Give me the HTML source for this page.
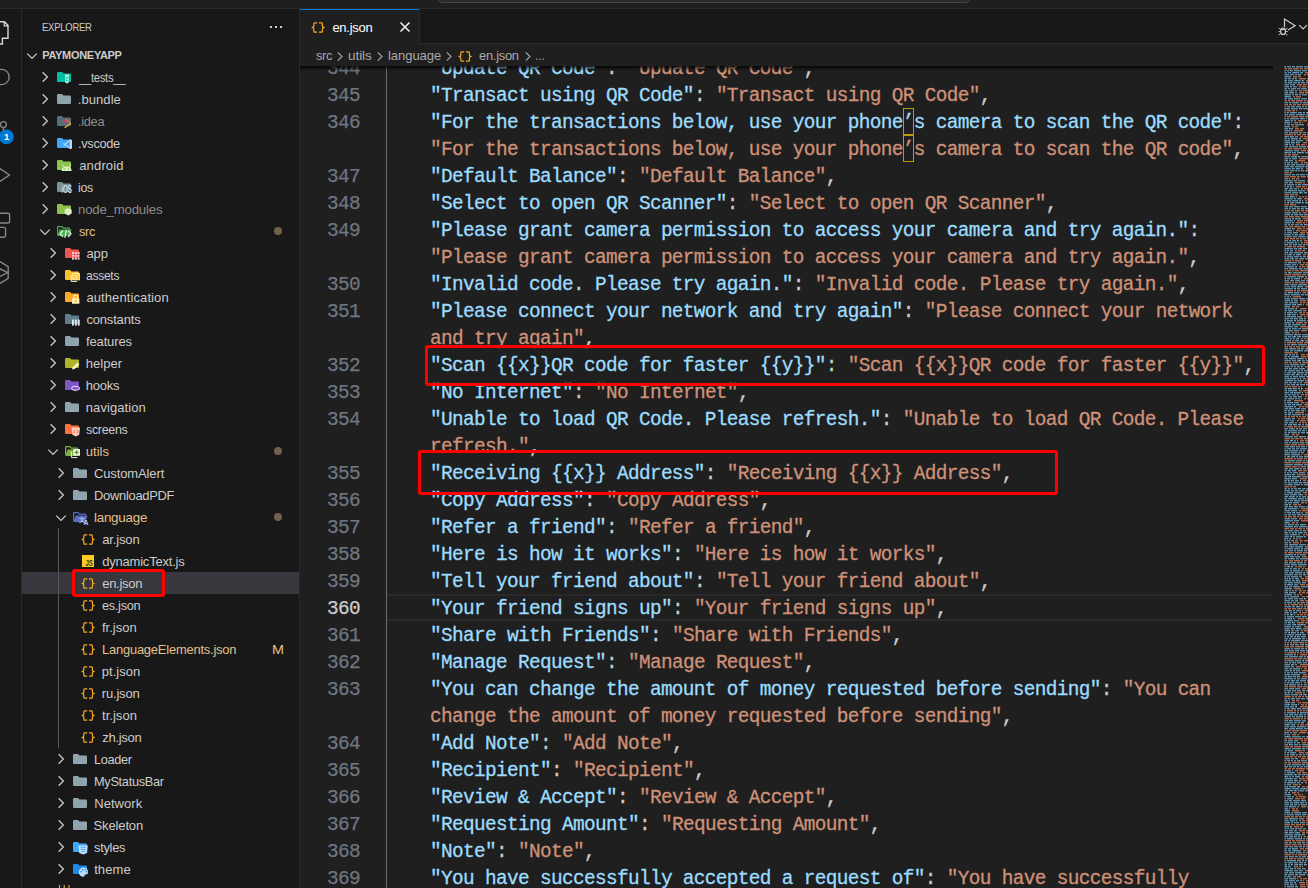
<!DOCTYPE html><html><head><meta charset="utf-8"><title>en.json - PayMoneyApp</title><style>
*{margin:0;padding:0;box-sizing:border-box}
html,body{width:1308px;height:888px;overflow:hidden;background:#1f1f1f}
body{position:relative;font-family:"Liberation Sans", sans-serif;font-size:13px;color:#cccccc}
.abs{position:absolute}
.t{position:absolute;white-space:pre;line-height:22px;height:22px}
svg{position:absolute;overflow:visible}
.code{position:absolute;left:430px;white-space:pre;font-family:"Liberation Mono", monospace;font-size:19.4px;letter-spacing:-0.642px;line-height:27px;height:27px;color:#cccccc;-webkit-text-stroke:0.3px}
.ln{position:absolute;left:300px;width:60px;text-align:right;white-space:pre;font-family:"Liberation Mono", monospace;font-size:19.4px;letter-spacing:-0.642px;line-height:27px;height:27px;color:#6e7681;-webkit-text-stroke:0.25px}
.k{color:#9cdcfe} .s{color:#ce9178}
.u{outline:1px solid #bd9b03;outline-offset:-1px;padding:4px 0 1px}
</style></head><body>
<div class="abs" style="left:0;top:0;width:1308px;height:9px;background:#1f1f1f;border-bottom:1px solid #2b2b2b"></div>
<div class="abs" style="left:436.5px;top:-10px;width:534px;height:13px;background:#2a2a2a;border:1px solid #454545;border-radius:6px"></div>
<div class="abs" style="left:0;top:9px;width:22px;height:879px;background:#181818;border-right:1px solid #2b2b2b"></div>
<div class="abs" style="left:22px;top:9px;width:278px;height:879px;background:#181818;border-right:1px solid #2b2b2b"></div>
<div class="abs" style="left:300px;top:9px;width:1008px;height:35px;background:#181818;border-bottom:1px solid #2b2b2b"></div>
<div class="abs" style="left:300px;top:9px;width:120px;height:35px;background:#1f1f1f;border-right:1px solid #2b2b2b"></div><div class="abs" style="left:300px;top:9px;width:119px;height:1px;background:#0078d4"></div>
<div class="t" style="left:42.2px;top:16px;color:#cccccc;font-size:11px;font-weight:400;letter-spacing:-0.3px;transform:scaleX(0.8636);transform-origin:0 50%;">EXPLORER</div>
<div class="abs" style="left:270px;top:26px;width:2px;height:2px;background:#ccc;box-shadow:5px 0 0 #ccc,10px 0 0 #ccc"></div>
<svg style="left:27px;top:52.5px" width="10" height="6"><path d="M0.3,0.6 L5,5.4 L9.7,0.6" fill="none" stroke="#cccccc" stroke-width="1.25"/></svg>
<div class="t" style="left:42.2px;top:44px;color:#cccccc;font-size:11px;font-weight:700;letter-spacing:-0.3px;">PAYMONEYAPP</div>
<svg style="left:42px;top:72px" width="6" height="10"><path d="M0.6,0.3 L5.4,5 L0.6,9.7" fill="none" stroke="#cccccc" stroke-width="1.25"/></svg>
<svg style="left:57px;top:72px" width="16" height="13"><path d="M0,1.1 Q0,0 1.1,0 H5 L6.4,1.5 H12.9 Q14,1.5 14,2.6 V8.9 Q14,10 12.9,10 H1.1 Q0,10 0,8.9 Z" fill="#00bfa5"/><path d="M7.6,2.6 H12.4 V3.6 H11.8 V9.6 Q11.8,11.6 10,11.6 Q8.2,11.6 8.2,9.6 V3.6 H7.6 Z" fill="#b2f0e3"/><rect x="9.2" y="5" width="1.6" height="1.4" fill="#00bfa5"/><rect x="9.2" y="7.6" width="1.6" height="1.6" fill="#00bfa5"/></svg>
<div class="t" style="left:79.4px;top:67px;color:#cccccc;font-size:13px;font-weight:400;letter-spacing:-0.3px;transform:scaleX(0.8615);transform-origin:0 50%;">__tests__</div>
<svg style="left:42px;top:94px" width="6" height="10"><path d="M0.6,0.3 L5.4,5 L0.6,9.7" fill="none" stroke="#cccccc" stroke-width="1.25"/></svg>
<svg style="left:57px;top:94px" width="16" height="13"><path d="M0,1.1 Q0,0 1.1,0 H5 L6.4,1.5 H12.9 Q14,1.5 14,2.6 V8.9 Q14,10 12.9,10 H1.1 Q0,10 0,8.9 Z" fill="#90a4ae"/></svg>
<div class="t" style="left:77.8px;top:89px;color:#cccccc;font-size:13px;font-weight:400;letter-spacing:0.067px;">.bundle</div>
<svg style="left:42px;top:116px" width="6" height="10"><path d="M0.6,0.3 L5.4,5 L0.6,9.7" fill="none" stroke="#cccccc" stroke-width="1.25"/></svg>
<svg style="left:57px;top:116px" width="16" height="13"><path d="M0,1.1 Q0,0 1.1,0 H5 L6.4,1.5 H12.9 Q14,1.5 14,2.6 V8.9 Q14,10 12.9,10 H1.1 Q0,10 0,8.9 Z" fill="#546e7a"/><path d="M9,3.4 L6.4,5.6 L8.6,7.3" fill="none" stroke="#ec2f6b" stroke-width="1.3"/><path d="M9,3.4 L13.8,7.6" fill="none" stroke="#f5703a" stroke-width="1.1"/><path d="M13.8,7.6 L7.6,11.8" fill="none" stroke="#fbb429" stroke-width="1.2"/></svg>
<div class="t" style="left:77.8px;top:111px;color:#8c8c8c;font-size:13px;font-weight:400;letter-spacing:-0.3px;transform:scaleX(0.9813);transform-origin:0 50%;">.idea</div>
<svg style="left:42px;top:138px" width="6" height="10"><path d="M0.6,0.3 L5.4,5 L0.6,9.7" fill="none" stroke="#cccccc" stroke-width="1.25"/></svg>
<svg style="left:57px;top:138px" width="16" height="13"><path d="M0,1.1 Q0,0 1.1,0 H5 L6.4,1.5 H12.9 Q14,1.5 14,2.6 V8.9 Q14,10 12.9,10 H1.1 Q0,10 0,8.9 Z" fill="#42a5f5"/><path d="M6.6,5.4 L13.4,10.6 L14.4,10.2 V2.4 L13.4,2 L6.6,7.4" fill="none" stroke="#bbdefb" stroke-width="1.1"/><path d="M13.6,2.2 V10.4" stroke="#bbdefb" stroke-width="1.6"/></svg>
<div class="t" style="left:77.8px;top:133px;color:#cccccc;font-size:13px;font-weight:400;letter-spacing:-0.3px;transform:scaleX(0.9814);transform-origin:0 50%;">.vscode</div>
<svg style="left:42px;top:160px" width="6" height="10"><path d="M0.6,0.3 L5.4,5 L0.6,9.7" fill="none" stroke="#cccccc" stroke-width="1.25"/></svg>
<svg style="left:57px;top:160px" width="16" height="13"><path d="M0,1.1 Q0,0 1.1,0 H5 L6.4,1.5 H12.9 Q14,1.5 14,2.6 V8.9 Q14,10 12.9,10 H1.1 Q0,10 0,8.9 Z" fill="#8bc34a"/><path d="M4.6,11 Q4.6,6.4 9.6,6.4 Q14.6,6.4 14.6,11 Z" fill="#dcedc8"/><path d="M5.4,4.4 L7.2,7 M13.8,4.4 L12,7" stroke="#dcedc8" stroke-width="1"/><circle cx="7.6" cy="9" r="0.8" fill="#8bc34a"/><circle cx="11.6" cy="9" r="0.8" fill="#8bc34a"/></svg>
<div class="t" style="left:79.2px;top:155px;color:#cccccc;font-size:13px;font-weight:400;letter-spacing:0.167px;">android</div>
<svg style="left:42px;top:182px" width="6" height="10"><path d="M0.6,0.3 L5.4,5 L0.6,9.7" fill="none" stroke="#cccccc" stroke-width="1.25"/></svg>
<svg style="left:57px;top:182px" width="16" height="13"><path d="M0,1.1 Q0,0 1.1,0 H5 L6.4,1.5 H12.9 Q14,1.5 14,2.6 V8.9 Q14,10 12.9,10 H1.1 Q0,10 0,8.9 Z" fill="#78909c"/><text x="4.6" y="10.6" font-family='"Liberation Sans",sans-serif' font-size="10" font-weight="400" fill="#e9eef1" textLength="10.4" lengthAdjust="spacingAndGlyphs">iOS</text></svg>
<div class="t" style="left:78.2px;top:177px;color:#cccccc;font-size:13px;font-weight:400;letter-spacing:-0.3px;transform:scaleX(0.9573);transform-origin:0 50%;">ios</div>
<svg style="left:42px;top:204px" width="6" height="10"><path d="M0.6,0.3 L5.4,5 L0.6,9.7" fill="none" stroke="#cccccc" stroke-width="1.25"/></svg>
<svg style="left:57px;top:204px" width="16" height="13"><path d="M0,1.1 Q0,0 1.1,0 H5 L6.4,1.5 H12.9 Q14,1.5 14,2.6 V8.9 Q14,10 12.9,10 H1.1 Q0,10 0,8.9 Z" fill="#8bc34a"/><path d="M11.2,3.9 L14.7,5.8 V9.6 L11.2,11.5 L7.7,9.6 V5.8 Z" fill="#dcedc8"/></svg>
<div class="t" style="left:78.2px;top:199px;color:#8c8c8c;font-size:13px;font-weight:400;letter-spacing:-0.173px;transform:scaleX(1.0134);transform-origin:0 50%;">node_modules</div>
<svg style="left:40px;top:228.5px" width="10" height="6"><path d="M0.3,0.6 L5,5.4 L9.7,0.6" fill="none" stroke="#cccccc" stroke-width="1.25"/></svg>
<svg style="left:57px;top:226px" width="16" height="13"><path d="M0.6,8.8 V1.2 Q0.6,0.6 1.2,0.6 H4.9 L6.3,2.1 H12 Q12.6,2.1 12.6,2.7 V3.6" fill="none" stroke="#4caf50" stroke-width="1.2"/><path d="M0.3,10 L2.6,3.6 H14.6 L12.4,10 Z" fill="#4caf50"/><path d="M6,4.6 L3.2,7.8 L6,11 M11.2,4.6 L14,7.8 L11.2,11 M9.4,4 L7.8,11.8" fill="none" stroke="#e3f3e4" stroke-width="1.25"/></svg>
<div class="t" style="left:78.8px;top:221px;color:#e2c08d;font-size:13px;font-weight:400;letter-spacing:-0.3px;transform:scaleX(0.9695);transform-origin:0 50%;">src</div>
<div class="abs" style="left:274px;top:227px;width:8px;height:8px;border-radius:4px;background:#71614a"></div>
<svg style="left:50px;top:248px" width="6" height="10"><path d="M0.6,0.3 L5.4,5 L0.6,9.7" fill="none" stroke="#cccccc" stroke-width="1.25"/></svg>
<svg style="left:65px;top:248px" width="16" height="13"><path d="M0,1.1 Q0,0 1.1,0 H5 L6.4,1.5 H12.9 Q14,1.5 14,2.6 V8.9 Q14,10 12.9,10 H1.1 Q0,10 0,8.9 Z" fill="#ef5350"/><g fill="#ffcdd2"><rect x="7" y="4" width="2" height="2"/><rect x="9.8" y="4" width="2" height="2"/><rect x="12.6" y="4" width="2" height="2"/><rect x="7" y="6.8" width="2" height="2"/><rect x="9.8" y="6.8" width="2" height="2"/><rect x="12.6" y="6.8" width="2" height="2"/><rect x="7" y="9.6" width="2" height="2"/><rect x="9.8" y="9.6" width="2" height="2"/><rect x="12.6" y="9.6" width="2" height="2"/></g></svg>
<div class="t" style="left:86.4px;top:243px;color:#cccccc;font-size:13px;font-weight:400;letter-spacing:-0.1px;">app</div>
<svg style="left:50px;top:270px" width="6" height="10"><path d="M0.6,0.3 L5.4,5 L0.6,9.7" fill="none" stroke="#cccccc" stroke-width="1.25"/></svg>
<svg style="left:65px;top:270px" width="16" height="13"><path d="M0,1.1 Q0,0 1.1,0 H5 L6.4,1.5 H12.9 Q14,1.5 14,2.6 V8.9 Q14,10 12.9,10 H1.1 Q0,10 0,8.9 Z" fill="#fbc02d"/><path d="M6.2,5.4 V11.4 H12" fill="none" stroke="#fff3c4" stroke-width="1"/><rect x="8" y="3.6" width="6.4" height="6.2" fill="none" stroke="#fff3c4" stroke-width="1"/><path d="M9.4,5.6 H13 M9.4,7.6 H13" stroke="#fff3c4" stroke-width="0.9"/></svg>
<div class="t" style="left:86.4px;top:265px;color:#cccccc;font-size:13px;font-weight:400;letter-spacing:-0.3px;transform:scaleX(0.926);transform-origin:0 50%;">assets</div>
<svg style="left:50px;top:292px" width="6" height="10"><path d="M0.6,0.3 L5.4,5 L0.6,9.7" fill="none" stroke="#cccccc" stroke-width="1.25"/></svg>
<svg style="left:65px;top:292px" width="16" height="13"><path d="M0,1.1 Q0,0 1.1,0 H5 L6.4,1.5 H12.9 Q14,1.5 14,2.6 V8.9 Q14,10 12.9,10 H1.1 Q0,10 0,8.9 Z" fill="#ffa726"/><rect x="7" y="6.2" width="7.4" height="5.6" rx="0.6" fill="#fff0b3"/><path d="M8.8,6.2 V4.8 Q8.8,3 10.7,3 Q12.6,3 12.6,4.8 V6.2" fill="none" stroke="#fff0b3" stroke-width="1.2"/><circle cx="10.7" cy="9" r="0.9" fill="#ffa726"/></svg>
<div class="t" style="left:86.4px;top:287px;color:#cccccc;font-size:13px;font-weight:400;letter-spacing:0.1px;">authentication</div>
<svg style="left:50px;top:314px" width="6" height="10"><path d="M0.6,0.3 L5.4,5 L0.6,9.7" fill="none" stroke="#cccccc" stroke-width="1.25"/></svg>
<svg style="left:65px;top:314px" width="16" height="13"><path d="M0,1.1 Q0,0 1.1,0 H5 L6.4,1.5 H12.9 Q14,1.5 14,2.6 V8.9 Q14,10 12.9,10 H1.1 Q0,10 0,8.9 Z" fill="#607d8b"/><g fill="#e3eaee"><rect x="7" y="5.6" width="1.9" height="6"/><rect x="9.9" y="5.6" width="1.9" height="6"/><rect x="12.8" y="5.6" width="1.9" height="6"/></g></svg>
<div class="t" style="left:86.4px;top:309px;color:#cccccc;font-size:13px;font-weight:400;letter-spacing:-0.175px;">constants</div>
<svg style="left:50px;top:336px" width="6" height="10"><path d="M0.6,0.3 L5.4,5 L0.6,9.7" fill="none" stroke="#cccccc" stroke-width="1.25"/></svg>
<svg style="left:65px;top:336px" width="16" height="13"><path d="M0,1.1 Q0,0 1.1,0 H5 L6.4,1.5 H12.9 Q14,1.5 14,2.6 V8.9 Q14,10 12.9,10 H1.1 Q0,10 0,8.9 Z" fill="#90a4ae"/></svg>
<div class="t" style="left:86.0px;top:331px;color:#cccccc;font-size:13px;font-weight:400;letter-spacing:-0.143px;">features</div>
<svg style="left:50px;top:358px" width="6" height="10"><path d="M0.6,0.3 L5.4,5 L0.6,9.7" fill="none" stroke="#cccccc" stroke-width="1.25"/></svg>
<svg style="left:65px;top:358px" width="16" height="13"><path d="M0,1.1 Q0,0 1.1,0 H5 L6.4,1.5 H12.9 Q14,1.5 14,2.6 V8.9 Q14,10 12.9,10 H1.1 Q0,10 0,8.9 Z" fill="#afb42b"/><path d="M7,11.4 L7.6,9.2 L12.4,4.4 L14.4,6.4 L9.6,11 Z" fill="#f4f7c7"/></svg>
<div class="t" style="left:85.8px;top:353px;color:#cccccc;font-size:13px;font-weight:400;letter-spacing:0.04px;">helper</div>
<svg style="left:50px;top:380px" width="6" height="10"><path d="M0.6,0.3 L5.4,5 L0.6,9.7" fill="none" stroke="#cccccc" stroke-width="1.25"/></svg>
<svg style="left:65px;top:380px" width="16" height="13"><path d="M0,1.1 Q0,0 1.1,0 H5 L6.4,1.5 H12.9 Q14,1.5 14,2.6 V8.9 Q14,10 12.9,10 H1.1 Q0,10 0,8.9 Z" fill="#7e57c2"/><ellipse cx="10.6" cy="8.3" rx="3.9" ry="1.9" fill="none" stroke="#e1c8fb" stroke-width="1.1"/><path d="M9.2,10 L10.6,11.6 L10.8,9.6 Z" fill="#e1c8fb"/></svg>
<div class="t" style="left:85.8px;top:375px;color:#cccccc;font-size:13px;font-weight:400;letter-spacing:-0.275px;">hooks</div>
<svg style="left:50px;top:402px" width="6" height="10"><path d="M0.6,0.3 L5.4,5 L0.6,9.7" fill="none" stroke="#cccccc" stroke-width="1.25"/></svg>
<svg style="left:65px;top:402px" width="16" height="13"><path d="M0,1.1 Q0,0 1.1,0 H5 L6.4,1.5 H12.9 Q14,1.5 14,2.6 V8.9 Q14,10 12.9,10 H1.1 Q0,10 0,8.9 Z" fill="#90a4ae"/></svg>
<div class="t" style="left:85.8px;top:397px;color:#cccccc;font-size:13px;font-weight:400;letter-spacing:0.067px;">navigation</div>
<svg style="left:50px;top:424px" width="6" height="10"><path d="M0.6,0.3 L5.4,5 L0.6,9.7" fill="none" stroke="#cccccc" stroke-width="1.25"/></svg>
<svg style="left:65px;top:424px" width="16" height="13"><path d="M0,1.1 Q0,0 1.1,0 H5 L6.4,1.5 H12.9 Q14,1.5 14,2.6 V8.9 Q14,10 12.9,10 H1.1 Q0,10 0,8.9 Z" fill="#ff7043"/><path d="M6.6,3.6 H15 L14.2,10.8 L10.8,12.6 L7.4,10.8 Z" fill="#ffccbc"/><path d="M9.8,6 L8.6,7.6 L9.8,9.2 M11.8,6 L13,7.6 L11.8,9.2" fill="none" stroke="#f4511e" stroke-width="0.9"/></svg>
<div class="t" style="left:86.4px;top:419px;color:#cccccc;font-size:13px;font-weight:400;letter-spacing:-0.3px;transform:scaleX(0.9548);transform-origin:0 50%;">screens</div>
<svg style="left:48px;top:448.5px" width="10" height="6"><path d="M0.3,0.6 L5,5.4 L9.7,0.6" fill="none" stroke="#cccccc" stroke-width="1.25"/></svg>
<svg style="left:65px;top:446px" width="16" height="13"><path d="M0.6,8.8 V1.2 Q0.6,0.6 1.2,0.6 H4.9 L6.3,2.1 H12 Q12.6,2.1 12.6,2.7 V3.6" fill="none" stroke="#7cb342" stroke-width="1.2"/><path d="M0.3,10 L2.6,3.6 H14.6 L12.4,10 Z" fill="#7cb342"/><path d="M6.4,5.4 V11.6 H12.4" fill="none" stroke="#e6f2d3" stroke-width="1"/><rect x="8.2" y="3" width="6.8" height="6.8" fill="#e6f2d3"/><path d="M9.8,6.4 H13.4 M11.6,4.6 V8.2" stroke="#558b2f" stroke-width="1.2"/></svg>
<div class="t" style="left:85.8px;top:441px;color:#e2c08d;font-size:13px;font-weight:400;letter-spacing:0.025px;">utils</div>
<div class="abs" style="left:274px;top:447px;width:8px;height:8px;border-radius:4px;background:#71614a"></div>
<svg style="left:58px;top:468px" width="6" height="10"><path d="M0.6,0.3 L5.4,5 L0.6,9.7" fill="none" stroke="#cccccc" stroke-width="1.25"/></svg>
<svg style="left:73px;top:468px" width="16" height="13"><path d="M0,1.1 Q0,0 1.1,0 H5 L6.4,1.5 H12.9 Q14,1.5 14,2.6 V8.9 Q14,10 12.9,10 H1.1 Q0,10 0,8.9 Z" fill="#90a4ae"/></svg>
<div class="t" style="left:93.9px;top:463px;color:#cccccc;font-size:13px;font-weight:400;letter-spacing:-0.11px;">CustomAlert</div>
<svg style="left:58px;top:490px" width="6" height="10"><path d="M0.6,0.3 L5.4,5 L0.6,9.7" fill="none" stroke="#cccccc" stroke-width="1.25"/></svg>
<svg style="left:73px;top:490px" width="16" height="13"><path d="M0,1.1 Q0,0 1.1,0 H5 L6.4,1.5 H12.9 Q14,1.5 14,2.6 V8.9 Q14,10 12.9,10 H1.1 Q0,10 0,8.9 Z" fill="#90a4ae"/></svg>
<div class="t" style="left:94.2px;top:485px;color:#cccccc;font-size:13px;font-weight:400;letter-spacing:-0.3px;transform:scaleX(0.9963);transform-origin:0 50%;">DownloadPDF</div>
<svg style="left:56px;top:514.5px" width="10" height="6"><path d="M0.3,0.6 L5,5.4 L9.7,0.6" fill="none" stroke="#cccccc" stroke-width="1.25"/></svg>
<svg style="left:73px;top:512px" width="16" height="13"><path d="M0.6,8.8 V1.2 Q0.6,0.6 1.2,0.6 H4.9 L6.3,2.1 H12 Q12.6,2.1 12.6,2.7 V3.6" fill="none" stroke="#5c6bc0" stroke-width="1.2"/><path d="M0.3,10 L2.6,3.6 H14.6 L12.4,10 Z" fill="#5c6bc0"/><text x="6" y="9.6" font-family='"Liberation Sans",sans-serif' font-size="6.4" font-weight="700" fill="#c5cae9">文</text><text x="10.4" y="12.6" font-family='"Liberation Sans",sans-serif' font-size="6.8" font-weight="700" fill="#c5cae9">A</text></svg>
<div class="t" style="left:94.2px;top:507px;color:#e2c08d;font-size:13px;font-weight:400;letter-spacing:-0.229px;transform:scaleX(1.0275);transform-origin:0 50%;">language</div>
<div class="abs" style="left:274px;top:513px;width:8px;height:8px;border-radius:4px;background:#71614a"></div>
<svg style="left:81px;top:533.5px" width="15" height="11"><path d="M6.2,0.9 H3.7 Q2.8,0.9 2.8,1.8 V4.3 Q2.8,5.5 0.7,5.5 Q2.8,5.5 2.8,6.7 V9.2 Q2.8,10.1 3.7,10.1 H6.2" fill="none" stroke="#f9a825" stroke-width="1.2"/><path d="M8,0.9 H10.5 Q11.4,0.9 11.4,1.8 V4.3 Q11.4,5.5 13.5,5.5 Q11.4,5.5 11.4,6.7 V9.2 Q11.4,10.1 10.5,10.1 H8" fill="none" stroke="#f9a825" stroke-width="1.2"/><circle cx="1.5" cy="5.5" r="0.8" fill="#f9a825"/><circle cx="12.7" cy="5.5" r="0.8" fill="#f9a825"/></svg>
<div class="t" style="left:102.2px;top:529px;color:#cccccc;font-size:13px;font-weight:400;letter-spacing:-0.133px;">ar.json</div>
<svg style="left:82px;top:555px" width="12" height="12"><rect x="0" y="0" width="12" height="12" fill="#ffca28"/><text x="3.5" y="10.8" font-family='"Liberation Sans",sans-serif' font-size="8.3" font-weight="700" fill="#3d3100" textLength="7.4" lengthAdjust="spacingAndGlyphs">JS</text></svg>
<div class="t" style="left:102.2px;top:551px;color:#cccccc;font-size:13px;font-weight:400;letter-spacing:-0.208px;">dynamicText.js</div>
<div class="abs" style="left:22px;top:572px;width:277px;height:22px;background:#37373d"></div>
<div class="abs" style="left:72px;top:569px;width:93px;height:28px;border:3px solid #ff0000;border-radius:3px"></div>
<svg style="left:81px;top:577.5px" width="15" height="11"><path d="M6.2,0.9 H3.7 Q2.8,0.9 2.8,1.8 V4.3 Q2.8,5.5 0.7,5.5 Q2.8,5.5 2.8,6.7 V9.2 Q2.8,10.1 3.7,10.1 H6.2" fill="none" stroke="#f9a825" stroke-width="1.2"/><path d="M8,0.9 H10.5 Q11.4,0.9 11.4,1.8 V4.3 Q11.4,5.5 13.5,5.5 Q11.4,5.5 11.4,6.7 V9.2 Q11.4,10.1 10.5,10.1 H8" fill="none" stroke="#f9a825" stroke-width="1.2"/><circle cx="1.5" cy="5.5" r="0.8" fill="#f9a825"/><circle cx="12.7" cy="5.5" r="0.8" fill="#f9a825"/></svg>
<div class="t" style="left:102.2px;top:573px;color:#cccccc;font-size:13px;font-weight:400;letter-spacing:-0.267px;">en.json</div>
<svg style="left:81px;top:599.5px" width="15" height="11"><path d="M6.2,0.9 H3.7 Q2.8,0.9 2.8,1.8 V4.3 Q2.8,5.5 0.7,5.5 Q2.8,5.5 2.8,6.7 V9.2 Q2.8,10.1 3.7,10.1 H6.2" fill="none" stroke="#f9a825" stroke-width="1.2"/><path d="M8,0.9 H10.5 Q11.4,0.9 11.4,1.8 V4.3 Q11.4,5.5 13.5,5.5 Q11.4,5.5 11.4,6.7 V9.2 Q11.4,10.1 10.5,10.1 H8" fill="none" stroke="#f9a825" stroke-width="1.2"/><circle cx="1.5" cy="5.5" r="0.8" fill="#f9a825"/><circle cx="12.7" cy="5.5" r="0.8" fill="#f9a825"/></svg>
<div class="t" style="left:102.2px;top:595px;color:#cccccc;font-size:13px;font-weight:400;letter-spacing:-0.3px;transform:scaleX(0.9796);transform-origin:0 50%;">es.json</div>
<svg style="left:81px;top:621.5px" width="15" height="11"><path d="M6.2,0.9 H3.7 Q2.8,0.9 2.8,1.8 V4.3 Q2.8,5.5 0.7,5.5 Q2.8,5.5 2.8,6.7 V9.2 Q2.8,10.1 3.7,10.1 H6.2" fill="none" stroke="#f9a825" stroke-width="1.2"/><path d="M8,0.9 H10.5 Q11.4,0.9 11.4,1.8 V4.3 Q11.4,5.5 13.5,5.5 Q11.4,5.5 11.4,6.7 V9.2 Q11.4,10.1 10.5,10.1 H8" fill="none" stroke="#f9a825" stroke-width="1.2"/><circle cx="1.5" cy="5.5" r="0.8" fill="#f9a825"/><circle cx="12.7" cy="5.5" r="0.8" fill="#f9a825"/></svg>
<div class="t" style="left:102.0px;top:617px;color:#cccccc;font-size:13px;font-weight:400;">fr.json</div>
<svg style="left:81px;top:643.5px" width="15" height="11"><path d="M6.2,0.9 H3.7 Q2.8,0.9 2.8,1.8 V4.3 Q2.8,5.5 0.7,5.5 Q2.8,5.5 2.8,6.7 V9.2 Q2.8,10.1 3.7,10.1 H6.2" fill="none" stroke="#f9a825" stroke-width="1.2"/><path d="M8,0.9 H10.5 Q11.4,0.9 11.4,1.8 V4.3 Q11.4,5.5 13.5,5.5 Q11.4,5.5 11.4,6.7 V9.2 Q11.4,10.1 10.5,10.1 H8" fill="none" stroke="#f9a825" stroke-width="1.2"/><circle cx="1.5" cy="5.5" r="0.8" fill="#f9a825"/><circle cx="12.7" cy="5.5" r="0.8" fill="#f9a825"/></svg>
<div class="t" style="left:101.8px;top:639px;color:#e2c08d;font-size:13px;font-weight:400;letter-spacing:-0.2px;transform:scaleX(0.9926);transform-origin:0 50%;">LanguageElements.json</div>
<div class="t" style="left:272.0px;top:639px;color:#e2c08d;font-size:13px;font-weight:400;letter-spacing:0.5px;transform:scaleX(1.1111);transform-origin:0 50%;">M</div>
<svg style="left:81px;top:665.5px" width="15" height="11"><path d="M6.2,0.9 H3.7 Q2.8,0.9 2.8,1.8 V4.3 Q2.8,5.5 0.7,5.5 Q2.8,5.5 2.8,6.7 V9.2 Q2.8,10.1 3.7,10.1 H6.2" fill="none" stroke="#f9a825" stroke-width="1.2"/><path d="M8,0.9 H10.5 Q11.4,0.9 11.4,1.8 V4.3 Q11.4,5.5 13.5,5.5 Q11.4,5.5 11.4,6.7 V9.2 Q11.4,10.1 10.5,10.1 H8" fill="none" stroke="#f9a825" stroke-width="1.2"/><circle cx="1.5" cy="5.5" r="0.8" fill="#f9a825"/><circle cx="12.7" cy="5.5" r="0.8" fill="#f9a825"/></svg>
<div class="t" style="left:101.8px;top:661px;color:#cccccc;font-size:13px;font-weight:400;letter-spacing:0.017px;">pt.json</div>
<svg style="left:81px;top:687.5px" width="15" height="11"><path d="M6.2,0.9 H3.7 Q2.8,0.9 2.8,1.8 V4.3 Q2.8,5.5 0.7,5.5 Q2.8,5.5 2.8,6.7 V9.2 Q2.8,10.1 3.7,10.1 H6.2" fill="none" stroke="#f9a825" stroke-width="1.2"/><path d="M8,0.9 H10.5 Q11.4,0.9 11.4,1.8 V4.3 Q11.4,5.5 13.5,5.5 Q11.4,5.5 11.4,6.7 V9.2 Q11.4,10.1 10.5,10.1 H8" fill="none" stroke="#f9a825" stroke-width="1.2"/><circle cx="1.5" cy="5.5" r="0.8" fill="#f9a825"/><circle cx="12.7" cy="5.5" r="0.8" fill="#f9a825"/></svg>
<div class="t" style="left:101.8px;top:683px;color:#cccccc;font-size:13px;font-weight:400;letter-spacing:-0.183px;">ru.json</div>
<svg style="left:81px;top:709.5px" width="15" height="11"><path d="M6.2,0.9 H3.7 Q2.8,0.9 2.8,1.8 V4.3 Q2.8,5.5 0.7,5.5 Q2.8,5.5 2.8,6.7 V9.2 Q2.8,10.1 3.7,10.1 H6.2" fill="none" stroke="#f9a825" stroke-width="1.2"/><path d="M8,0.9 H10.5 Q11.4,0.9 11.4,1.8 V4.3 Q11.4,5.5 13.5,5.5 Q11.4,5.5 11.4,6.7 V9.2 Q11.4,10.1 10.5,10.1 H8" fill="none" stroke="#f9a825" stroke-width="1.2"/><circle cx="1.5" cy="5.5" r="0.8" fill="#f9a825"/><circle cx="12.7" cy="5.5" r="0.8" fill="#f9a825"/></svg>
<div class="t" style="left:102.0px;top:705px;color:#cccccc;font-size:13px;font-weight:400;letter-spacing:0.033px;">tr.json</div>
<svg style="left:81px;top:731.5px" width="15" height="11"><path d="M6.2,0.9 H3.7 Q2.8,0.9 2.8,1.8 V4.3 Q2.8,5.5 0.7,5.5 Q2.8,5.5 2.8,6.7 V9.2 Q2.8,10.1 3.7,10.1 H6.2" fill="none" stroke="#f9a825" stroke-width="1.2"/><path d="M8,0.9 H10.5 Q11.4,0.9 11.4,1.8 V4.3 Q11.4,5.5 13.5,5.5 Q11.4,5.5 11.4,6.7 V9.2 Q11.4,10.1 10.5,10.1 H8" fill="none" stroke="#f9a825" stroke-width="1.2"/><circle cx="1.5" cy="5.5" r="0.8" fill="#f9a825"/><circle cx="12.7" cy="5.5" r="0.8" fill="#f9a825"/></svg>
<div class="t" style="left:102.2px;top:727px;color:#cccccc;font-size:13px;font-weight:400;letter-spacing:-0.267px;">zh.json</div>
<svg style="left:58px;top:754px" width="6" height="10"><path d="M0.6,0.3 L5.4,5 L0.6,9.7" fill="none" stroke="#cccccc" stroke-width="1.25"/></svg>
<svg style="left:73px;top:754px" width="16" height="13"><path d="M0,1.1 Q0,0 1.1,0 H5 L6.4,1.5 H12.9 Q14,1.5 14,2.6 V8.9 Q14,10 12.9,10 H1.1 Q0,10 0,8.9 Z" fill="#90a4ae"/></svg>
<div class="t" style="left:94.2px;top:749px;color:#cccccc;font-size:13px;font-weight:400;letter-spacing:-0.3px;transform:scaleX(0.9772);transform-origin:0 50%;">Loader</div>
<svg style="left:58px;top:776px" width="6" height="10"><path d="M0.6,0.3 L5.4,5 L0.6,9.7" fill="none" stroke="#cccccc" stroke-width="1.25"/></svg>
<svg style="left:73px;top:776px" width="16" height="13"><path d="M0,1.1 Q0,0 1.1,0 H5 L6.4,1.5 H12.9 Q14,1.5 14,2.6 V8.9 Q14,10 12.9,10 H1.1 Q0,10 0,8.9 Z" fill="#90a4ae"/></svg>
<div class="t" style="left:94.2px;top:771px;color:#cccccc;font-size:13px;font-weight:400;letter-spacing:-0.3px;transform:scaleX(0.9806);transform-origin:0 50%;">MyStatusBar</div>
<svg style="left:58px;top:798px" width="6" height="10"><path d="M0.6,0.3 L5.4,5 L0.6,9.7" fill="none" stroke="#cccccc" stroke-width="1.25"/></svg>
<svg style="left:73px;top:798px" width="16" height="13"><path d="M0,1.1 Q0,0 1.1,0 H5 L6.4,1.5 H12.9 Q14,1.5 14,2.6 V8.9 Q14,10 12.9,10 H1.1 Q0,10 0,8.9 Z" fill="#90a4ae"/></svg>
<div class="t" style="left:94.2px;top:793px;color:#cccccc;font-size:13px;font-weight:400;letter-spacing:0.067px;">Network</div>
<svg style="left:58px;top:820px" width="6" height="10"><path d="M0.6,0.3 L5.4,5 L0.6,9.7" fill="none" stroke="#cccccc" stroke-width="1.25"/></svg>
<svg style="left:73px;top:820px" width="16" height="13"><path d="M0,1.1 Q0,0 1.1,0 H5 L6.4,1.5 H12.9 Q14,1.5 14,2.6 V8.9 Q14,10 12.9,10 H1.1 Q0,10 0,8.9 Z" fill="#90a4ae"/></svg>
<div class="t" style="left:93.6px;top:815px;color:#cccccc;font-size:13px;font-weight:400;letter-spacing:-0.143px;">Skeleton</div>
<svg style="left:58px;top:842px" width="6" height="10"><path d="M0.6,0.3 L5.4,5 L0.6,9.7" fill="none" stroke="#cccccc" stroke-width="1.25"/></svg>
<svg style="left:73px;top:842px" width="16" height="13"><path d="M0,1.1 Q0,0 1.1,0 H5 L6.4,1.5 H12.9 Q14,1.5 14,2.6 V8.9 Q14,10 12.9,10 H1.1 Q0,10 0,8.9 Z" fill="#42a5f5"/><path d="M5.4,3.4 H14.8 L14,11 L10.1,12.6 L6.2,11 Z" fill="#bbdefb"/><path d="M7.6,5.4 H12.8 M7.8,7.4 H12.6 M8,9.4 H12.4" stroke="#42a5f5" stroke-width="0.9"/></svg>
<div class="t" style="left:93.9px;top:837px;color:#cccccc;font-size:13px;font-weight:400;letter-spacing:-0.3px;transform:scaleX(0.9937);transform-origin:0 50%;">styles</div>
<svg style="left:58px;top:864px" width="6" height="10"><path d="M0.6,0.3 L5.4,5 L0.6,9.7" fill="none" stroke="#cccccc" stroke-width="1.25"/></svg>
<svg style="left:73px;top:864px" width="16" height="13"><path d="M0,1.1 Q0,0 1.1,0 H5 L6.4,1.5 H12.9 Q14,1.5 14,2.6 V8.9 Q14,10 12.9,10 H1.1 Q0,10 0,8.9 Z" fill="#1e88e5"/><path d="M10.4,3.6 A4.6,4.6 0 1 0 10.4,12.8 Q11.6,12.8 11.4,11.8 Q11.2,10.4 12.6,10.4 H13.6 Q15,10.4 15,8.6 Q15,3.6 10.4,3.6 Z" fill="#bbdefb"/><circle cx="8" cy="7.8" r="0.8" fill="#1e88e5"/><circle cx="9.6" cy="5.8" r="0.8" fill="#1e88e5"/><circle cx="12" cy="5.8" r="0.8" fill="#1e88e5"/><circle cx="13.2" cy="7.8" r="0.8" fill="#1e88e5"/></svg>
<div class="t" style="left:94.2px;top:859px;color:#cccccc;font-size:13px;font-weight:400;letter-spacing:0.075px;">theme</div>
<div class="abs" style="left:58px;top:528px;width:1px;height:220px;background:#585858"></div>
<div class="abs" style="left:58.5px;top:884.5px;width:1.5px;height:4px;background:#fbc02d;box-shadow:4.7px 0 0 #fbc02d,9.5px 0 0 #fbc02d"></div>
<svg style="left:0;top:9px" width="22" height="300"><path d="M-4,12.8 H4.4 L8,16.4 V29.2 H2.4 V35 H-4" fill="none" stroke="#d7d7d7" stroke-width="1.4"/><path d="M4.2,13 V16.8 H8" fill="none" stroke="#d7d7d7" stroke-width="1.2"/><circle cx="1.6" cy="68" r="7.6" fill="none" stroke="#868686" stroke-width="1.4"/><circle cx="3.4" cy="115.6" r="3" fill="none" stroke="#868686" stroke-width="1.4"/><path d="M3.4,118.6 V124" stroke="#868686" stroke-width="1.4"/><circle cx="6.4" cy="127.8" r="7.4" fill="#0078d4"/><text x="4" y="131.4" font-family='"Liberation Sans",sans-serif' font-size="9.5" font-weight="700" fill="#fff">1</text><path d="M-1,159 L9.4,166 L-1,173" fill="none" stroke="#868686" stroke-width="1.4"/><rect x="-2" y="204.2" width="11.6" height="9.8" rx="1.6" fill="none" stroke="#868686" stroke-width="1.4"/><rect x="-5" y="218.4" width="10.6" height="9.8" rx="1.6" fill="none" stroke="#868686" stroke-width="1.4"/><path d="M-1,252 L8.2,257.6 V269.4 L-1,275" fill="none" stroke="#868686" stroke-width="1.4"/><path d="M-1,259.4 L7.6,263.6 L-1,268" fill="none" stroke="#868686" stroke-width="1.4"/></svg>
<svg style="left:311px;top:21.5px" width="15" height="11"><path d="M6.2,0.9 H3.7 Q2.8,0.9 2.8,1.8 V4.3 Q2.8,5.5 0.7,5.5 Q2.8,5.5 2.8,6.7 V9.2 Q2.8,10.1 3.7,10.1 H6.2" fill="none" stroke="#f9a825" stroke-width="1.2"/><path d="M8,0.9 H10.5 Q11.4,0.9 11.4,1.8 V4.3 Q11.4,5.5 13.5,5.5 Q11.4,5.5 11.4,6.7 V9.2 Q11.4,10.1 10.5,10.1 H8" fill="none" stroke="#f9a825" stroke-width="1.2"/><circle cx="1.5" cy="5.5" r="0.8" fill="#f9a825"/><circle cx="12.7" cy="5.5" r="0.8" fill="#f9a825"/></svg>
<div class="t" style="left:332.4px;top:16.5px;color:#ffffff;font-size:13px;font-weight:400;letter-spacing:-0.267px;">en.json</div>
<svg style="left:400px;top:22px" width="10" height="10"><path d="M0.5,0.5 L9.5,9.5 M9.5,0.5 L0.5,9.5" stroke="#f4f4f4" stroke-width="1.45" fill="none"/></svg>
<svg style="left:1276px;top:16px" width="32" height="24"><path d="M8.5,11 V3 L19.2,9.7 L12,14.1" fill="none" stroke="#d0d0d0" stroke-width="1.15" stroke-linejoin="miter"/><ellipse cx="7.1" cy="15.3" rx="2.5" ry="3.3" fill="#181818" stroke="#d0d0d0" stroke-width="1.1"/><path d="M4.9,13.6 H9.3" stroke="#d0d0d0" stroke-width="1"/><path d="M2.7,12.2 L4.7,13.4 M11.5,12.2 L9.5,13.4 M2.4,15.6 H4.5 M11.8,15.6 H9.7 M2.7,19 L4.8,17.6 M11.5,19 L9.4,17.6" stroke="#d0d0d0" stroke-width="0.9" fill="none"/><path d="M23.2,9.2 L27.1,13 L31,9.2" fill="none" stroke="#d0d0d0" stroke-width="1.15"/></svg>
<div class="t" style="left:316.0px;top:45px;color:#a9a9a9;font-size:13px;font-weight:400;letter-spacing:-0.3px;transform:scaleX(0.9756);transform-origin:0 50%;">src</div>
<svg style="left:337px;top:51.5px" width="6" height="9"><path d="M0.8,0.4 L5,4.5 L0.8,8.6" fill="none" stroke="#a9a9a9" stroke-width="1.1"/></svg>
<div class="t" style="left:348.2px;top:45px;color:#a9a9a9;font-size:13px;font-weight:400;letter-spacing:-0.05px;transform:scaleX(1.0364);transform-origin:0 50%;">utils</div>
<svg style="left:377px;top:51.5px" width="6" height="9"><path d="M0.8,0.4 L5,4.5 L0.8,8.6" fill="none" stroke="#a9a9a9" stroke-width="1.1"/></svg>
<div class="t" style="left:388.0px;top:45px;color:#a9a9a9;font-size:13px;font-weight:400;letter-spacing:-0.043px;">language</div>
<svg style="left:446px;top:51.5px" width="6" height="9"><path d="M0.8,0.4 L5,4.5 L0.8,8.6" fill="none" stroke="#a9a9a9" stroke-width="1.1"/></svg>
<svg style="left:458px;top:50.5px" width="15" height="11"><path d="M6.2,0.9 H3.7 Q2.8,0.9 2.8,1.8 V4.3 Q2.8,5.5 0.7,5.5 Q2.8,5.5 2.8,6.7 V9.2 Q2.8,10.1 3.7,10.1 H6.2" fill="none" stroke="#f9a825" stroke-width="1.2"/><path d="M8,0.9 H10.5 Q11.4,0.9 11.4,1.8 V4.3 Q11.4,5.5 13.5,5.5 Q11.4,5.5 11.4,6.7 V9.2 Q11.4,10.1 10.5,10.1 H8" fill="none" stroke="#f9a825" stroke-width="1.2"/><circle cx="1.5" cy="5.5" r="0.8" fill="#f9a825"/><circle cx="12.7" cy="5.5" r="0.8" fill="#f9a825"/></svg>
<div class="t" style="left:478.8px;top:45px;color:#a9a9a9;font-size:13px;font-weight:400;letter-spacing:-0.3px;transform:scaleX(0.9975);transform-origin:0 50%;">en.json</div>
<svg style="left:525px;top:51.5px" width="6" height="9"><path d="M0.8,0.4 L5,4.5 L0.8,8.6" fill="none" stroke="#a9a9a9" stroke-width="1.1"/></svg>
<div class="t" style="left:535.0px;top:45px;color:#a9a9a9;font-size:13px;font-weight:400;letter-spacing:-0.3px;transform:scaleX(0.7818);transform-origin:0 50%;">…</div>
<div class="abs" style="left:300px;top:66px;width:1008px;height:822px;overflow:hidden">
<div class="abs" style="left:-300px;top:-66px;width:1308px;height:888px">
<div class="abs" style="left:386px;top:66px;width:1px;height:822px;background:#6c6c6c"></div>
<div class="ln" style="top:56px;">344</div>
<div class="code" style="top:56px"><span class="k">"Update QR Code"</span>: <span class="s">"Update QR Code"</span>,</div>
<div class="ln" style="top:83px;">345</div>
<div class="code" style="top:83px"><span class="k">"Transact using QR Code"</span>: <span class="s">"Transact using QR Code"</span>,</div>
<div class="ln" style="top:110px;">346</div>
<div class="code" style="top:110px"><span class="k">"For the transactions below, use your phone<span class="u">’</span>s camera to scan the QR code"</span>:</div>
<div class="code" style="top:137px"><span class="s">"For the transactions below, use your phone<span class="u">’</span>s camera to scan the QR code"</span>,</div>
<div class="ln" style="top:164px;">347</div>
<div class="code" style="top:164px"><span class="k">"Default Balance"</span>: <span class="s">"Default Balance"</span>,</div>
<div class="ln" style="top:191px;">348</div>
<div class="code" style="top:191px"><span class="k">"Select to open QR Scanner"</span>: <span class="s">"Select to open QR Scanner"</span>,</div>
<div class="ln" style="top:218px;">349</div>
<div class="code" style="top:218px"><span class="k">"Please grant camera permission to access your camera and try again."</span>:</div>
<div class="code" style="top:245px"><span class="s">"Please grant camera permission to access your camera and try again."</span>,</div>
<div class="ln" style="top:272px;">350</div>
<div class="code" style="top:272px"><span class="k">"Invalid code. Please try again."</span>: <span class="s">"Invalid code. Please try again."</span>,</div>
<div class="ln" style="top:299px;">351</div>
<div class="code" style="top:299px"><span class="k">"Please connect your network and try again"</span>: <span class="s">"Please connect your network</span></div>
<div class="code" style="top:326px"><span class="s">and try again"</span>,</div>
<div class="ln" style="top:353px;">352</div>
<div class="code" style="top:353px"><span class="k">"Scan {{x}}QR code for faster {{y}}"</span>: <span class="s">"Scan {{x}}QR code for faster {{y}}"</span>,</div>
<div class="ln" style="top:380px;">353</div>
<div class="code" style="top:380px"><span class="k">"No Internet"</span>: <span class="s">"No Internet"</span>,</div>
<div class="ln" style="top:407px;">354</div>
<div class="code" style="top:407px"><span class="k">"Unable to load QR Code. Please refresh."</span>: <span class="s">"Unable to load QR Code. Please</span></div>
<div class="code" style="top:434px"><span class="s">refresh."</span>,</div>
<div class="ln" style="top:461px;">355</div>
<div class="code" style="top:461px"><span class="k">"Receiving {{x}} Address"</span>: <span class="s">"Receiving {{x}} Address"</span>,</div>
<div class="ln" style="top:488px;">356</div>
<div class="code" style="top:488px"><span class="k">"Copy Address"</span>: <span class="s">"Copy Address"</span>,</div>
<div class="ln" style="top:515px;">357</div>
<div class="code" style="top:515px"><span class="k">"Refer a friend"</span>: <span class="s">"Refer a friend"</span>,</div>
<div class="ln" style="top:542px;">358</div>
<div class="code" style="top:542px"><span class="k">"Here is how it works"</span>: <span class="s">"Here is how it works"</span>,</div>
<div class="ln" style="top:569px;">359</div>
<div class="code" style="top:569px"><span class="k">"Tell your friend about"</span>: <span class="s">"Tell your friend about"</span>,</div>
<div class="abs" style="left:387px;top:594px;width:885px;height:27px;border-top:2px solid #292929;border-bottom:2px solid #292929"></div>
<div class="ln" style="top:596px;color:#cccccc;">360</div>
<div class="code" style="top:596px"><span class="k">"Your friend signs up"</span>: <span class="s">"Your friend signs up"</span>,</div>
<div class="ln" style="top:623px;">361</div>
<div class="code" style="top:623px"><span class="k">"Share with Friends"</span>: <span class="s">"Share with Friends"</span>,</div>
<div class="ln" style="top:650px;">362</div>
<div class="code" style="top:650px"><span class="k">"Manage Request"</span>: <span class="s">"Manage Request"</span>,</div>
<div class="ln" style="top:677px;">363</div>
<div class="code" style="top:677px"><span class="k">"You can change the amount of money requested before sending"</span>: <span class="s">"You can</span></div>
<div class="code" style="top:704px"><span class="s">change the amount of money requested before sending"</span>,</div>
<div class="ln" style="top:731px;">364</div>
<div class="code" style="top:731px"><span class="k">"Add Note"</span>: <span class="s">"Add Note"</span>,</div>
<div class="ln" style="top:758px;">365</div>
<div class="code" style="top:758px"><span class="k">"Recipient"</span>: <span class="s">"Recipient"</span>,</div>
<div class="ln" style="top:785px;">366</div>
<div class="code" style="top:785px"><span class="k">"Review &amp; Accept"</span>: <span class="s">"Review &amp; Accept"</span>,</div>
<div class="ln" style="top:812px;">367</div>
<div class="code" style="top:812px"><span class="k">"Requesting Amount"</span>: <span class="s">"Requesting Amount"</span>,</div>
<div class="ln" style="top:839px;">368</div>
<div class="code" style="top:839px"><span class="k">"Note"</span>: <span class="s">"Note"</span>,</div>
<div class="ln" style="top:866px;">369</div>
<div class="code" style="top:866px"><span class="k">"You have successfully accepted a request of"</span>: <span class="s">"You have successfully</span></div>
</div></div>
<div class="abs" style="left:300px;top:66px;width:973px;height:5px;background:linear-gradient(#000000cc,#00000000)"></div>
<div class="abs" style="left:425px;top:345px;width:840px;height:41px;border:3px solid #ff0000;border-radius:3px"></div>
<div class="abs" style="left:418px;top:450px;width:640px;height:45px;border:3px solid #ff0000;border-radius:3px"></div>
<svg style="left:1284px;top:66px" width="24" height="822" shape-rendering="crispEdges"><path id="mb" d="M0,0.5h2M3,0.5h4M8,0.5h3M12,0.5h7M20,0.5h5M0,4.5h2M3,4.5h2M6,4.5h3M10,4.5h7M18,4.5h5M24,4.5h1M0,6.5h3M4,6.5h3M8,6.5h7M16,6.5h3M0,8.5h5M6,8.5h4M11,8.5h2M14,8.5h3M0,10.5h7M0,12.5h3M4,12.5h3M8,12.5h2M11,12.5h2M0,14.5h3M4,14.5h5M10,14.5h7M18,14.5h2M0,16.5h3M4,16.5h4M9,16.5h4M14,16.5h2M17,16.5h4M22,16.5h3M0,18.5h5M6,18.5h5M0,20.5h5M6,20.5h2M9,20.5h4M0,22.5h3M4,22.5h2M7,22.5h5M13,22.5h3M17,22.5h6M0,24.5h4M5,24.5h5M11,24.5h2M0,26.5h4M5,26.5h5M11,26.5h2M0,28.5h7M8,28.5h2M11,28.5h3M15,28.5h2M18,28.5h5M0,30.5h7M0,32.5h3M4,32.5h5M10,32.5h6M17,32.5h6M24,32.5h1M0,36.5h4M5,36.5h2M8,36.5h7M16,36.5h2M19,36.5h6M0,40.5h2M3,40.5h3M7,40.5h4M12,40.5h5M18,40.5h2M21,40.5h2M0,42.5h6M7,42.5h7M15,42.5h3M19,42.5h6M0,46.5h2M3,46.5h2M6,46.5h7M14,46.5h4M19,46.5h2M22,46.5h3M0,48.5h4M5,48.5h6M12,48.5h9M22,48.5h3M0,52.5h2M3,52.5h2M6,52.5h9M16,52.5h5M22,52.5h1M0,54.5h6M7,54.5h2M10,54.5h2M0,56.5h6M7,56.5h1M0,58.5h2M3,58.5h3M7,58.5h3M11,58.5h9M0,60.5h6M0,62.5h4M5,62.5h4M0,64.5h6M7,64.5h1M0,66.5h4M5,66.5h9M15,66.5h3M19,66.5h3M23,66.5h2M0,70.5h5M6,70.5h4M11,70.5h3M0,72.5h3M4,72.5h2M7,72.5h7M15,72.5h2M0,74.5h6M7,74.5h4M12,74.5h7M0,76.5h6M7,76.5h4M12,76.5h4M0,78.5h4M5,78.5h2M8,78.5h2M0,80.5h4M5,80.5h9M15,80.5h7M23,80.5h2M0,84.5h9M10,84.5h5M0,86.5h7M8,86.5h4M13,86.5h7M21,86.5h4M0,90.5h6M7,90.5h6M14,90.5h2M17,90.5h7M0,92.5h4M5,92.5h2M8,92.5h5M0,94.5h4M5,94.5h4M0,96.5h2M3,96.5h3M7,96.5h2M10,96.5h4M0,98.5h2M3,98.5h3M7,98.5h4M12,98.5h9M22,98.5h3M0,100.5h5M6,100.5h4M11,100.5h9M21,100.5h4M0,102.5h7M8,102.5h3M12,102.5h4M17,102.5h2M0,104.5h5M6,104.5h4M11,104.5h2M14,104.5h2M17,104.5h3M21,104.5h4M0,108.5h7M8,108.5h3M12,108.5h3M16,108.5h5M22,108.5h3M0,112.5h4M5,112.5h1M0,114.5h9M10,114.5h3M14,114.5h7M0,116.5h4M5,116.5h4M0,118.5h2M3,118.5h7M11,118.5h2M14,118.5h3M18,118.5h7M0,120.5h2M3,120.5h2M6,120.5h2M9,120.5h1M0,122.5h4M5,122.5h4M10,122.5h3M14,122.5h1M0,124.5h3M4,124.5h9M14,124.5h7M0,126.5h7M8,126.5h6M15,126.5h4M20,126.5h3M24,126.5h1M0,130.5h5M6,130.5h5M12,130.5h1M0,132.5h9M10,132.5h2M13,132.5h5M0,134.5h2M3,134.5h4M8,134.5h6M15,134.5h2M18,134.5h1M0,136.5h2M3,136.5h2M6,136.5h4M11,136.5h6M18,136.5h2M21,136.5h4M0,140.5h4M5,140.5h4M10,140.5h6M17,140.5h6M0,142.5h4M5,142.5h2M8,142.5h4M13,142.5h3M17,142.5h3M21,142.5h4M0,146.5h7M8,146.5h6M15,146.5h2M0,148.5h6M7,148.5h2M10,148.5h4M15,148.5h4M20,148.5h5M0,152.5h7M8,152.5h2M11,152.5h6M0,154.5h9M10,154.5h1M0,156.5h7M8,156.5h2M0,158.5h3M4,158.5h2M7,158.5h3M11,158.5h4M16,158.5h3M20,158.5h5M0,162.5h7M8,162.5h3M0,164.5h2M3,164.5h5M9,164.5h1M0,166.5h2M3,166.5h5M9,166.5h5M0,168.5h7M8,168.5h2M11,168.5h3M15,168.5h6M0,170.5h2M3,170.5h5M9,170.5h4M14,170.5h7M22,170.5h3M0,174.5h4M5,174.5h2M8,174.5h4M13,174.5h2M16,174.5h2M0,176.5h2M3,176.5h7M11,176.5h2M14,176.5h1M0,178.5h4M5,178.5h3M9,178.5h4M14,178.5h4M19,178.5h2M22,178.5h3M0,182.5h9M10,182.5h3M14,182.5h4M19,182.5h4M24,182.5h1M0,184.5h2M3,184.5h2M6,184.5h3M0,186.5h4M5,186.5h4M10,186.5h9M20,186.5h4M0,188.5h2M3,188.5h5M9,188.5h2M12,188.5h5M0,190.5h2M3,190.5h6M10,190.5h5M16,190.5h2M19,190.5h3M23,190.5h1M0,192.5h5M6,192.5h4M11,192.5h3M15,192.5h5M21,192.5h4M0,196.5h3M4,196.5h9M14,196.5h3M0,198.5h7M8,198.5h4M13,198.5h1M0,200.5h2M3,200.5h7M11,200.5h2M0,202.5h4M5,202.5h9M15,202.5h4M20,202.5h4M0,206.5h3M4,206.5h4M9,206.5h9M19,206.5h6M0,210.5h2M3,210.5h9M13,210.5h7M21,210.5h2M0,212.5h2M3,212.5h3M7,212.5h2M10,212.5h6M17,212.5h1M0,214.5h5M6,214.5h4M11,214.5h5M17,214.5h4M22,214.5h3M0,218.5h5M6,218.5h7M14,218.5h9M24,218.5h1M0,220.5h2M3,220.5h3M7,220.5h5M13,220.5h6M0,222.5h9M10,222.5h2M13,222.5h3M17,222.5h6M24,222.5h1M0,226.5h3M4,226.5h5M10,226.5h5M16,226.5h1M0,228.5h6M7,228.5h9M17,228.5h3M21,228.5h3M0,230.5h2M3,230.5h2M6,230.5h1M0,232.5h6M7,232.5h7M15,232.5h6M22,232.5h3M0,234.5h6M7,234.5h2M10,234.5h4M0,236.5h4M5,236.5h9M0,238.5h7M8,238.5h4M13,238.5h5M19,238.5h1M0,240.5h6M0,242.5h3M4,242.5h6M11,242.5h2M0,244.5h3M4,244.5h4M9,244.5h9M19,244.5h3M0,246.5h2M3,246.5h6M10,246.5h3M0,248.5h2M3,248.5h4M8,248.5h4M13,248.5h1M0,250.5h2M3,250.5h9M13,250.5h5M0,252.5h5M6,252.5h3M10,252.5h4M15,252.5h4M20,252.5h2M0,254.5h2M3,254.5h6M10,254.5h2M13,254.5h9M23,254.5h2M0,256.5h7M8,256.5h2M0,258.5h3M4,258.5h3M8,258.5h9M18,258.5h4M0,260.5h9M10,260.5h4M0,262.5h4M5,262.5h2M8,262.5h5M14,262.5h3M18,262.5h6M0,264.5h4M5,264.5h4M10,264.5h5M0,266.5h6M0,268.5h9M10,268.5h7M18,268.5h7M0,270.5h3M4,270.5h3M8,270.5h4M13,270.5h4M18,270.5h7M0,272.5h5M6,272.5h2M9,272.5h2M12,272.5h3M0,274.5h7M8,274.5h2M11,274.5h4M16,274.5h4M21,274.5h4M0,278.5h2M3,278.5h3M7,278.5h6M14,278.5h9M24,278.5h1M0,282.5h4M5,282.5h7M13,282.5h3M17,282.5h3M21,282.5h3M0,284.5h5M6,284.5h3M10,284.5h9M20,284.5h5M0,288.5h4M5,288.5h2M8,288.5h3M12,288.5h2M0,290.5h3M4,290.5h2M7,290.5h8M0,292.5h4M5,292.5h7M13,292.5h7M21,292.5h2M24,292.5h1M0,294.5h7M8,294.5h4M13,294.5h4M18,294.5h3M22,294.5h3M0,298.5h2M3,298.5h2M6,298.5h9M16,298.5h5M0,300.5h6M7,300.5h2M10,300.5h2M13,300.5h3M17,300.5h2M0,302.5h4M5,302.5h3M9,302.5h5M15,302.5h6M0,304.5h3M4,304.5h7M12,304.5h4M17,304.5h2M20,304.5h4M0,306.5h2M3,306.5h4M8,306.5h4M13,306.5h7M21,306.5h3M0,308.5h6M7,308.5h4M12,308.5h4M17,308.5h2M20,308.5h3M0,310.5h5M6,310.5h2M9,310.5h5M15,310.5h6M22,310.5h3M0,312.5h2M3,312.5h9M13,312.5h2M16,312.5h1M0,314.5h9M10,314.5h3M14,314.5h6M21,314.5h4M0,316.5h4M5,316.5h3M9,316.5h3M13,316.5h2M16,316.5h2M0,318.5h2M3,318.5h3M7,318.5h4M12,318.5h3M16,318.5h5M22,318.5h2M0,322.5h3M4,322.5h4M9,322.5h4M14,322.5h2M17,322.5h2M0,324.5h3M4,324.5h9M0,326.5h5M6,326.5h3M10,326.5h7M18,326.5h1M0,328.5h3M4,328.5h3M8,328.5h4M13,328.5h2M0,330.5h4M5,330.5h3M9,330.5h4M14,330.5h4M0,332.5h3M4,332.5h6M11,332.5h2M14,332.5h2M17,332.5h1M0,334.5h2M3,334.5h4M0,336.5h2M3,336.5h6M10,336.5h5M0,338.5h3M4,338.5h3M8,338.5h3M12,338.5h6M0,340.5h9M10,340.5h2M0,342.5h4M5,342.5h5M11,342.5h5M17,342.5h5M0,344.5h3M4,344.5h2M7,344.5h4M12,344.5h4M17,344.5h3M21,344.5h1M0,346.5h3M4,346.5h3M8,346.5h1M0,348.5h3M4,348.5h3M8,348.5h9M18,348.5h2M21,348.5h3M0,352.5h7M8,352.5h3M0,354.5h5M6,354.5h4M0,356.5h4M5,356.5h5M11,356.5h2M0,358.5h3M4,358.5h4M9,358.5h4M14,358.5h3M18,358.5h2M21,358.5h3M0,362.5h4M5,362.5h6M12,362.5h2M15,362.5h3M19,362.5h4M0,364.5h3M4,364.5h9M14,364.5h3M18,364.5h3M22,364.5h1M0,366.5h3M4,366.5h2M7,366.5h6M14,366.5h2M17,366.5h4M22,366.5h3M0,368.5h5M0,370.5h9M10,370.5h4M15,370.5h7M23,370.5h2M0,374.5h5M6,374.5h3M10,374.5h2M13,374.5h1M0,376.5h4M5,376.5h2M8,376.5h7M16,376.5h4M21,376.5h3M0,380.5h5M6,380.5h5M12,380.5h4M17,380.5h4M22,380.5h1M0,382.5h2M3,382.5h4M8,382.5h3M12,382.5h3M16,382.5h7M24,382.5h1M0,384.5h4M5,384.5h9M15,384.5h3M19,384.5h2M0,386.5h6M7,386.5h6M14,386.5h2M17,386.5h3M0,388.5h6M7,388.5h9M17,388.5h1M0,390.5h2M3,390.5h3M7,390.5h4M12,390.5h2M15,390.5h4M20,390.5h4M0,394.5h3M4,394.5h7M12,394.5h6M19,394.5h2M22,394.5h3M0,398.5h9M10,398.5h9M20,398.5h4M0,402.5h4M5,402.5h4M10,402.5h5M16,402.5h2M19,402.5h3M23,402.5h1M0,404.5h3M4,404.5h3M8,404.5h4M0,406.5h2M3,406.5h2M6,406.5h2M9,406.5h5M15,406.5h6M0,408.5h7M8,408.5h3M0,410.5h3M4,410.5h3M8,410.5h9M18,410.5h6M0,412.5h7M8,412.5h5M0,414.5h3M4,414.5h2M7,414.5h3M11,414.5h4M16,414.5h1M0,416.5h3M4,416.5h4M9,416.5h5M15,416.5h3M19,416.5h5M0,418.5h2M3,418.5h6M10,418.5h6M17,418.5h2M20,418.5h5M0,422.5h3M4,422.5h2M7,422.5h2M10,422.5h3M14,422.5h3M18,422.5h3M22,422.5h2M0,424.5h6M7,424.5h3M11,424.5h3M15,424.5h5M21,424.5h4M0,426.5h2M3,426.5h6M10,426.5h7M0,428.5h5M6,428.5h7M14,428.5h5M0,430.5h4M5,430.5h6M12,430.5h2M15,430.5h2M18,430.5h4M23,430.5h2M0,432.5h3M4,432.5h9M14,432.5h6M21,432.5h3M0,434.5h5M6,434.5h3M10,434.5h6M17,434.5h7M0,436.5h3M4,436.5h4M9,436.5h6M0,438.5h4M5,438.5h2M0,440.5h4M5,440.5h4M10,440.5h4M15,440.5h6M22,440.5h2M0,442.5h3M4,442.5h9M14,442.5h1M0,444.5h6M7,444.5h6M0,446.5h2M3,446.5h4M8,446.5h3M12,446.5h4M17,446.5h2M0,448.5h3M4,448.5h3M8,448.5h4M13,448.5h4M18,448.5h6M0,452.5h6M7,452.5h6M0,454.5h9M10,454.5h5M0,456.5h6M0,458.5h3M4,458.5h6M11,458.5h4M16,458.5h6M0,460.5h9M10,460.5h4M15,460.5h9M0,464.5h3M4,464.5h5M10,464.5h5M16,464.5h2M19,464.5h3M23,464.5h2M0,466.5h4M5,466.5h2M8,466.5h2M11,466.5h2M14,466.5h5M20,466.5h3M24,466.5h1M0,468.5h5M6,468.5h7M14,468.5h2M0,470.5h5M6,470.5h2M9,470.5h2M12,470.5h7M20,470.5h2M0,472.5h4M5,472.5h2M0,474.5h2M3,474.5h3M7,474.5h3M11,474.5h3M0,476.5h4M5,476.5h2M0,478.5h4M5,478.5h9M15,478.5h7M23,478.5h2M0,480.5h4M5,480.5h5M11,480.5h8M0,482.5h2M3,482.5h6M10,482.5h6M17,482.5h2M20,482.5h5M0,484.5h4M5,484.5h4M10,484.5h2M13,484.5h6M20,484.5h3M24,484.5h1M0,488.5h9M10,488.5h2M13,488.5h2M16,488.5h6M0,490.5h5M6,490.5h4M11,490.5h5M0,492.5h3M4,492.5h7M12,492.5h3M16,492.5h9M0,496.5h4M5,496.5h7M13,496.5h6M20,496.5h2M0,498.5h6M7,498.5h6M14,498.5h9M24,498.5h1M0,500.5h2M3,500.5h3M7,500.5h2M0,502.5h5M6,502.5h2M9,502.5h4M14,502.5h2M0,504.5h5M6,504.5h2M9,504.5h7M17,504.5h2M0,506.5h4M5,506.5h5M11,506.5h7M19,506.5h2M22,506.5h3M0,508.5h9M10,508.5h4M15,508.5h3M19,508.5h3M23,508.5h2M0,510.5h2M3,510.5h3M7,510.5h7M15,510.5h3M0,512.5h4M5,512.5h2M8,512.5h2M11,512.5h4M0,514.5h7M8,514.5h3M12,514.5h4M0,516.5h3M4,516.5h5M10,516.5h7M18,516.5h4M0,518.5h2M3,518.5h6M10,518.5h4M0,520.5h4M5,520.5h3M9,520.5h7M17,520.5h8M0,522.5h8M0,524.5h4M5,524.5h2M8,524.5h2M11,524.5h2M0,526.5h4M5,526.5h7M0,528.5h8M0,530.5h2M3,530.5h2M6,530.5h9M0,532.5h3M4,532.5h5M10,532.5h4M15,532.5h4M20,532.5h2M0,534.5h6M7,534.5h3M11,534.5h3M0,536.5h2M3,536.5h5M9,536.5h3M13,536.5h3M17,536.5h4M22,536.5h3M0,540.5h7M8,540.5h3M12,540.5h4M17,540.5h2M20,540.5h2M23,540.5h2M0,544.5h4M5,544.5h3M9,544.5h2M12,544.5h5M18,544.5h1M0,546.5h5M6,546.5h2M9,546.5h4M0,548.5h2M3,548.5h2M6,548.5h3M10,548.5h1M0,550.5h2M3,550.5h7M11,550.5h6M18,550.5h5M24,550.5h1M0,552.5h2M3,552.5h5M9,552.5h2M0,554.5h9M10,554.5h5M0,556.5h3M4,556.5h3M8,556.5h3M0,558.5h2M3,558.5h4M8,558.5h4M13,558.5h9M0,560.5h7M8,560.5h2M11,560.5h6M0,562.5h6M7,562.5h4M12,562.5h6M19,562.5h6M0,564.5h6M7,564.5h3M11,564.5h4M0,566.5h3M4,566.5h2M7,566.5h5M13,566.5h2M16,566.5h4M0,568.5h2M3,568.5h7M11,568.5h6M18,568.5h4M0,570.5h2M3,570.5h2M6,570.5h3M10,570.5h2M13,570.5h3M17,570.5h5M0,572.5h4M5,572.5h2M8,572.5h9M18,572.5h3M22,572.5h1M0,574.5h3M4,574.5h2M7,574.5h9M17,574.5h8M0,578.5h2M3,578.5h2M6,578.5h4M11,578.5h4M16,578.5h4M21,578.5h4M0,582.5h6M7,582.5h2M10,582.5h6M17,582.5h3M21,582.5h2M24,582.5h1M0,584.5h4M5,584.5h5M11,584.5h4M16,584.5h5M22,584.5h2M0,588.5h9M10,588.5h2M13,588.5h1M0,590.5h4M5,590.5h9M15,590.5h4M20,590.5h2M23,590.5h2M0,594.5h2M3,594.5h7M11,594.5h6M18,594.5h2M21,594.5h4M0,596.5h4M5,596.5h2M8,596.5h4M13,596.5h5M19,596.5h4M24,596.5h1M0,598.5h6M7,598.5h3M11,598.5h2M0,600.5h6M7,600.5h3M0,602.5h4M5,602.5h3M9,602.5h7M17,602.5h1M0,604.5h5M6,604.5h2M9,604.5h2M12,604.5h4M0,606.5h2M3,606.5h3M7,606.5h2M10,606.5h4M15,606.5h7M0,608.5h6M7,608.5h9M0,610.5h3M4,610.5h4M9,610.5h3M13,610.5h3M0,612.5h9M10,612.5h2M13,612.5h3M17,612.5h6M24,612.5h1M0,614.5h3M4,614.5h2M7,614.5h4M12,614.5h3M16,614.5h6M23,614.5h2M0,616.5h2M3,616.5h2M6,616.5h4M11,616.5h5M17,616.5h1M0,618.5h4M5,618.5h7M13,618.5h3M17,618.5h2M20,618.5h3M24,618.5h1M0,622.5h4M5,622.5h5M11,622.5h5M0,624.5h2M3,624.5h4M8,624.5h4M13,624.5h4M18,624.5h3M22,624.5h2M0,626.5h3M4,626.5h2M7,626.5h2M0,628.5h6M7,628.5h7M15,628.5h3M19,628.5h4M24,628.5h1M0,632.5h3M4,632.5h2M7,632.5h4M12,632.5h4M17,632.5h4M22,632.5h3M0,634.5h4M5,634.5h1M0,636.5h6M7,636.5h4M0,638.5h6M7,638.5h6M14,638.5h1M0,640.5h5M6,640.5h4M11,640.5h2M0,642.5h2M3,642.5h3M7,642.5h5M13,642.5h4M18,642.5h7M0,646.5h2M3,646.5h9M13,646.5h2M16,646.5h8M0,648.5h4M5,648.5h4M10,648.5h4M15,648.5h4M20,648.5h2M23,648.5h2M0,650.5h7M8,650.5h3M12,650.5h7M20,650.5h2M23,650.5h2M0,654.5h4M5,654.5h4M10,654.5h7M18,654.5h4M0,656.5h2M3,656.5h6M10,656.5h3M14,656.5h2M17,656.5h3M0,658.5h6M7,658.5h4M0,660.5h5M6,660.5h6M13,660.5h9M23,660.5h2M0,662.5h4M5,662.5h6M12,662.5h7M20,662.5h5M0,666.5h5M6,666.5h2M9,666.5h4M0,668.5h2M3,668.5h3M0,670.5h7M8,670.5h9M18,670.5h3M22,670.5h3M0,674.5h3M4,674.5h5M10,674.5h4M0,676.5h2M3,676.5h6M10,676.5h2M13,676.5h3M0,678.5h4M5,678.5h4M10,678.5h4M15,678.5h2M18,678.5h7M0,682.5h7M8,682.5h9M18,682.5h3M22,682.5h3M0,684.5h3M4,684.5h5M0,686.5h2M3,686.5h2M6,686.5h6M0,688.5h2M3,688.5h2M6,688.5h5M12,688.5h2M15,688.5h3M19,688.5h2M22,688.5h3M0,692.5h6M7,692.5h3M11,692.5h3M0,694.5h2M3,694.5h3M7,694.5h2M10,694.5h2M13,694.5h3M17,694.5h6M24,694.5h1M0,698.5h2M3,698.5h4M8,698.5h9M18,698.5h3M22,698.5h3M0,700.5h4M5,700.5h3M9,700.5h3M13,700.5h2M16,700.5h3M20,700.5h5M0,704.5h7M8,704.5h1M0,706.5h2M3,706.5h8M0,708.5h9M10,708.5h3M14,708.5h3M18,708.5h3M22,708.5h3M0,710.5h4M5,710.5h2M8,710.5h2M11,710.5h5M0,712.5h9M10,712.5h3M0,714.5h3M4,714.5h5M10,714.5h4M15,714.5h2M0,716.5h2M3,716.5h9M13,716.5h3M17,716.5h2M0,718.5h2M3,718.5h4M0,720.5h4M5,720.5h7M13,720.5h3M0,722.5h7M8,722.5h7M16,722.5h9M0,724.5h4M5,724.5h4M10,724.5h3M14,724.5h6M21,724.5h3M0,726.5h3M4,726.5h2M0,728.5h7M0,730.5h2M3,730.5h4M8,730.5h2M0,732.5h2M3,732.5h6M0,734.5h4M5,734.5h3M9,734.5h7M17,734.5h5M0,736.5h5M6,736.5h3M10,736.5h5M16,736.5h4M21,736.5h2M0,738.5h5M6,738.5h3M10,738.5h3M14,738.5h2M17,738.5h6M24,738.5h1M0,740.5h4M5,740.5h7M13,740.5h2M0,742.5h4M5,742.5h1M0,744.5h6M0,746.5h6M7,746.5h2M10,746.5h7M18,746.5h5M24,746.5h1M0,748.5h2M3,748.5h7M11,748.5h6M18,748.5h4M23,748.5h2M0,752.5h4M5,752.5h9M15,752.5h5M0,754.5h5M6,754.5h5M12,754.5h1M0,756.5h6M7,756.5h2M10,756.5h5M16,756.5h5M22,756.5h3M0,760.5h5M6,760.5h2M0,762.5h2M3,762.5h2M6,762.5h4M11,762.5h2M14,762.5h4M19,762.5h3M0,764.5h4M5,764.5h4M10,764.5h3M0,766.5h4M5,766.5h5M11,766.5h5M0,768.5h9M10,768.5h7M18,768.5h3M0,770.5h4M5,770.5h4M10,770.5h3M14,770.5h2M17,770.5h1M0,772.5h2M3,772.5h7M11,772.5h7M19,772.5h2M22,772.5h3M0,776.5h4M5,776.5h3M9,776.5h3M13,776.5h4M18,776.5h3M22,776.5h3M0,780.5h4M5,780.5h4M10,780.5h4M15,780.5h3M19,780.5h2M22,780.5h2M0,782.5h3M4,782.5h3M8,782.5h6M0,784.5h3M4,784.5h3M8,784.5h9M0,786.5h4M5,786.5h6M12,786.5h6M19,786.5h2M22,786.5h2M0,790.5h4M5,790.5h5M11,790.5h3M15,790.5h2M18,790.5h4M23,790.5h2M0,794.5h2M3,794.5h9M13,794.5h4M18,794.5h2M21,794.5h2M24,794.5h1M0,796.5h3M4,796.5h5M10,796.5h4M15,796.5h4M20,796.5h2M0,798.5h3M4,798.5h2M7,798.5h2M10,798.5h4M15,798.5h4M20,798.5h3M24,798.5h1M0,800.5h3M4,800.5h3M0,802.5h5M6,802.5h3M10,802.5h2M13,802.5h4M18,802.5h4M0,804.5h9M10,804.5h4M15,804.5h4M0,806.5h4M5,806.5h5M11,806.5h7M19,806.5h4M24,806.5h1M0,808.5h3M4,808.5h6M11,808.5h3M15,808.5h6M0,810.5h2M3,810.5h4M0,812.5h4M5,812.5h7M13,812.5h1M0,814.5h4M5,814.5h6M12,814.5h3M16,814.5h2M19,814.5h1M0,816.5h5M6,816.5h3M10,816.5h2M0,818.5h2M3,818.5h2M6,818.5h4M11,818.5h2M0,820.5h2M3,820.5h7M11,820.5h3" stroke="#5a89a4" stroke-width="1" fill="none"/><path id="mo" d="M0,2.5h3M4,2.5h4M9,2.5h6M16,2.5h3M20,2.5h5M21,6.5h4M20,8.5h2M23,8.5h2M9,10.5h4M14,10.5h3M15,12.5h7M23,12.5h2M22,14.5h3M13,18.5h5M19,18.5h4M24,18.5h1M15,20.5h2M18,20.5h4M23,20.5h2M15,24.5h3M19,24.5h5M15,26.5h5M21,26.5h4M9,30.5h2M12,30.5h5M0,34.5h3M4,34.5h2M7,34.5h4M12,34.5h7M20,34.5h2M23,34.5h2M0,38.5h4M5,38.5h3M9,38.5h3M13,38.5h4M18,38.5h7M0,44.5h2M3,44.5h4M8,44.5h3M12,44.5h1M0,50.5h2M3,50.5h3M7,50.5h7M15,50.5h5M21,50.5h4M14,54.5h4M19,54.5h4M24,54.5h1M10,56.5h4M15,56.5h2M18,56.5h1M23,58.5h2M8,60.5h2M11,60.5h3M11,62.5h4M16,62.5h4M10,64.5h9M0,68.5h9M10,68.5h2M13,68.5h4M18,68.5h4M23,68.5h2M16,70.5h3M20,70.5h5M19,72.5h5M22,74.5h3M19,76.5h4M24,76.5h1M12,78.5h4M17,78.5h4M22,78.5h1M0,82.5h3M4,82.5h4M9,82.5h9M19,82.5h4M17,84.5h5M23,84.5h2M0,88.5h3M4,88.5h3M8,88.5h6M15,92.5h9M11,94.5h2M14,94.5h7M17,96.5h2M20,96.5h4M22,102.5h3M0,106.5h5M6,106.5h2M0,110.5h5M6,110.5h6M13,110.5h3M17,110.5h5M23,110.5h2M8,112.5h3M12,112.5h3M23,114.5h2M11,116.5h7M19,116.5h2M12,120.5h5M18,120.5h3M22,120.5h1M17,122.5h2M20,122.5h4M23,124.5h2M0,128.5h5M6,128.5h4M11,128.5h3M15,130.5h2M18,130.5h2M21,130.5h2M24,130.5h1M20,132.5h5M21,134.5h2M24,134.5h1M0,138.5h5M6,138.5h6M0,144.5h2M3,144.5h3M7,144.5h3M11,144.5h5M17,144.5h3M21,144.5h4M19,146.5h4M24,146.5h1M0,150.5h4M5,150.5h5M11,150.5h5M17,150.5h7M19,152.5h6M13,154.5h6M20,154.5h5M12,156.5h6M19,156.5h2M22,156.5h1M0,160.5h4M5,160.5h4M10,160.5h7M18,160.5h3M22,160.5h1M13,162.5h5M19,162.5h2M22,162.5h2M12,164.5h4M17,164.5h6M16,166.5h5M22,166.5h3M23,168.5h2M0,172.5h5M6,172.5h5M12,172.5h3M16,172.5h2M19,172.5h3M23,172.5h2M20,174.5h5M17,176.5h2M20,176.5h5M0,180.5h2M3,180.5h5M9,180.5h3M13,180.5h8M11,184.5h2M14,184.5h3M18,184.5h3M19,188.5h3M23,188.5h2M0,194.5h7M8,194.5h2M11,194.5h6M18,194.5h1M19,196.5h2M22,196.5h2M16,198.5h4M21,198.5h4M15,200.5h2M18,200.5h3M22,200.5h2M0,204.5h2M3,204.5h4M8,204.5h2M11,204.5h4M16,204.5h9M0,208.5h7M8,208.5h9M18,208.5h4M23,208.5h2M20,212.5h4M0,216.5h7M8,216.5h2M11,216.5h3M15,216.5h6M22,216.5h3M21,220.5h3M0,224.5h9M10,224.5h2M13,224.5h3M17,224.5h8M19,226.5h3M23,226.5h2M9,230.5h8M16,234.5h6M23,234.5h2M16,236.5h2M19,236.5h2M22,236.5h3M22,238.5h3M8,240.5h3M12,240.5h3M16,242.5h7M24,242.5h1M24,244.5h1M15,246.5h3M19,246.5h2M22,246.5h3M16,248.5h5M22,248.5h3M20,250.5h2M23,250.5h2M24,252.5h1M12,256.5h7M20,256.5h3M16,260.5h9M17,264.5h6M24,264.5h1M8,266.5h2M11,266.5h2M14,266.5h1M17,272.5h2M20,272.5h2M23,272.5h2M0,276.5h2M3,276.5h9M13,276.5h6M20,276.5h4M0,280.5h4M5,280.5h3M9,280.5h2M12,280.5h4M17,280.5h4M22,280.5h3M0,286.5h9M10,286.5h4M17,288.5h4M22,288.5h3M17,290.5h5M23,290.5h2M0,296.5h4M5,296.5h3M9,296.5h5M15,296.5h2M18,296.5h6M23,298.5h2M21,300.5h4M23,302.5h2M19,312.5h3M23,312.5h2M20,316.5h5M0,320.5h4M5,320.5h2M8,320.5h5M14,320.5h2M17,320.5h1M21,322.5h4M15,324.5h3M19,324.5h6M21,326.5h4M17,328.5h3M21,328.5h4M21,330.5h2M24,330.5h1M20,332.5h2M23,332.5h2M10,334.5h9M17,336.5h3M21,336.5h4M20,338.5h5M15,340.5h2M18,340.5h2M21,340.5h4M24,342.5h1M24,344.5h1M11,346.5h9M0,350.5h3M4,350.5h2M7,350.5h4M12,350.5h2M15,350.5h2M18,350.5h4M23,350.5h2M14,352.5h2M17,352.5h4M22,352.5h3M13,354.5h2M16,354.5h6M23,354.5h2M15,356.5h2M18,356.5h2M21,356.5h2M24,356.5h1M0,360.5h2M3,360.5h6M10,360.5h3M14,360.5h2M17,360.5h8M8,368.5h3M12,368.5h3M0,372.5h6M7,372.5h3M11,372.5h4M16,372.5h3M20,372.5h5M16,374.5h4M21,374.5h3M0,378.5h6M7,378.5h6M14,378.5h7M22,378.5h3M23,384.5h2M23,386.5h2M20,388.5h5M0,392.5h9M10,392.5h2M13,392.5h6M20,392.5h3M24,392.5h1M0,396.5h7M8,396.5h2M11,396.5h6M18,396.5h7M0,400.5h7M8,400.5h5M14,400.5h2M17,400.5h5M23,400.5h2M14,404.5h4M19,404.5h4M24,404.5h1M23,406.5h2M13,408.5h9M23,408.5h2M16,412.5h7M24,412.5h1M19,414.5h3M23,414.5h2M0,420.5h5M6,420.5h2M9,420.5h3M19,426.5h4M24,426.5h1M21,428.5h2M24,428.5h1M17,436.5h3M21,436.5h2M24,436.5h1M9,438.5h4M14,438.5h3M17,442.5h8M15,444.5h2M18,444.5h7M21,446.5h3M0,450.5h3M4,450.5h4M9,450.5h3M13,450.5h2M16,450.5h3M20,450.5h5M15,452.5h4M20,452.5h5M17,454.5h8M8,456.5h3M12,456.5h2M24,458.5h1M0,462.5h5M6,462.5h4M11,462.5h2M14,462.5h4M19,462.5h2M22,462.5h3M19,468.5h2M22,468.5h3M24,470.5h1M9,472.5h2M12,472.5h2M15,472.5h2M16,474.5h3M20,474.5h5M9,476.5h6M16,476.5h1M21,480.5h4M0,486.5h3M4,486.5h6M11,486.5h7M19,486.5h6M24,488.5h1M18,490.5h5M24,490.5h1M0,494.5h4M5,494.5h4M10,494.5h6M17,494.5h2M20,494.5h3M24,494.5h1M24,496.5h1M11,500.5h2M14,500.5h4M19,500.5h2M18,502.5h2M21,502.5h4M21,504.5h4M21,510.5h3M17,512.5h3M21,512.5h4M18,514.5h6M24,516.5h1M16,518.5h5M22,518.5h3M10,522.5h7M18,522.5h1M15,524.5h3M19,524.5h3M23,524.5h2M15,526.5h2M18,526.5h3M22,526.5h3M10,528.5h2M13,528.5h2M16,528.5h2M18,530.5h3M22,530.5h3M16,534.5h4M21,534.5h4M0,538.5h3M4,538.5h2M7,538.5h7M15,538.5h4M20,538.5h4M0,542.5h3M4,542.5h3M8,542.5h4M13,542.5h5M19,542.5h6M21,544.5h4M15,546.5h2M18,546.5h5M24,546.5h1M13,548.5h2M16,548.5h3M20,548.5h2M23,548.5h2M14,552.5h6M21,552.5h3M17,554.5h4M22,554.5h3M13,556.5h7M21,556.5h3M20,560.5h5M17,564.5h2M20,564.5h5M23,566.5h2M24,568.5h1M24,570.5h1M0,576.5h2M3,576.5h2M6,576.5h2M9,576.5h5M15,576.5h5M21,576.5h2M24,576.5h1M0,580.5h5M6,580.5h4M11,580.5h9M21,580.5h4M0,586.5h2M3,586.5h9M13,586.5h2M16,586.5h2M19,586.5h2M22,586.5h3M16,588.5h7M24,588.5h1M0,592.5h9M10,592.5h3M14,592.5h4M19,592.5h6M16,598.5h9M12,600.5h5M18,600.5h5M20,602.5h3M24,602.5h1M18,604.5h6M19,608.5h4M24,608.5h1M18,610.5h7M20,616.5h2M23,616.5h2M0,620.5h4M5,620.5h7M13,620.5h5M19,620.5h6M18,622.5h4M23,622.5h2M11,626.5h7M19,626.5h2M0,630.5h7M8,630.5h2M11,630.5h2M14,630.5h3M18,630.5h2M21,630.5h4M8,634.5h3M12,634.5h3M14,636.5h3M18,636.5h6M17,638.5h3M21,638.5h2M24,638.5h1M16,640.5h9M0,644.5h2M3,644.5h6M10,644.5h2M13,644.5h2M16,644.5h2M19,644.5h2M22,644.5h3M0,652.5h5M6,652.5h2M9,652.5h7M17,652.5h2M20,652.5h2M23,652.5h2M24,654.5h1M23,656.5h2M13,658.5h2M16,658.5h4M21,658.5h4M0,664.5h2M3,664.5h4M8,664.5h7M16,664.5h7M24,664.5h1M15,666.5h7M23,666.5h2M8,668.5h4M13,668.5h2M0,672.5h3M4,672.5h5M10,672.5h9M20,672.5h4M17,674.5h2M20,674.5h3M24,674.5h1M18,676.5h4M23,676.5h2M0,680.5h5M6,680.5h3M10,680.5h7M18,680.5h7M11,684.5h7M19,684.5h2M15,686.5h5M21,686.5h4M0,690.5h5M6,690.5h3M10,690.5h3M14,690.5h3M18,690.5h4M23,690.5h2M17,692.5h4M22,692.5h3M0,696.5h3M4,696.5h3M8,696.5h9M18,696.5h7M0,702.5h3M4,702.5h3M8,702.5h3M12,702.5h9M22,702.5h3M11,704.5h3M15,704.5h5M13,706.5h4M18,706.5h5M24,706.5h1M18,710.5h2M21,710.5h3M15,712.5h6M22,712.5h3M19,714.5h4M24,714.5h1M21,716.5h2M24,716.5h1M9,718.5h5M15,718.5h2M18,720.5h3M22,720.5h3M8,726.5h4M13,726.5h2M10,728.5h3M14,728.5h3M18,728.5h1M12,730.5h2M15,730.5h7M11,732.5h5M17,732.5h4M24,734.5h1M17,740.5h5M23,740.5h2M8,742.5h3M12,742.5h2M8,744.5h7M0,750.5h6M7,750.5h3M11,750.5h3M15,750.5h3M19,750.5h2M22,750.5h2M22,752.5h3M15,754.5h2M18,754.5h3M22,754.5h3M0,758.5h6M7,758.5h4M12,758.5h5M18,758.5h3M22,758.5h3M10,760.5h5M16,760.5h3M24,762.5h1M15,764.5h6M22,764.5h3M18,766.5h3M22,766.5h3M24,768.5h1M20,770.5h2M23,770.5h2M0,774.5h7M8,774.5h3M12,774.5h9M22,774.5h3M0,778.5h7M8,778.5h5M14,778.5h4M19,778.5h6M16,782.5h4M21,782.5h4M19,784.5h3M23,784.5h2M0,788.5h7M8,788.5h2M11,788.5h2M14,788.5h9M24,788.5h1M0,792.5h4M5,792.5h4M10,792.5h2M13,792.5h7M21,792.5h4M10,800.5h4M15,800.5h2M18,800.5h1M24,802.5h1M21,804.5h4M23,808.5h2M9,810.5h3M13,810.5h4M16,812.5h2M19,812.5h4M24,812.5h1M22,814.5h3M15,816.5h6M22,816.5h3M16,818.5h5M22,818.5h3M16,820.5h6M23,820.5h2" stroke="#a9684b" stroke-width="1" fill="none"/><path d="M1,0.5h1M8,0.5h1M6,4.5h1M10,6.5h1M14,8.5h1M9,12.5h1M11,12.5h1M1,14.5h1M12,14.5h1M18,14.5h1M7,16.5h1M14,16.5h1M24,16.5h1M0,20.5h1M3,26.5h1M7,26.5h1M1,28.5h1M13,28.5h1M2,30.5h1M24,32.5h1M6,36.5h1M12,36.5h1M7,40.5h1M17,42.5h1M3,46.5h1M9,46.5h1M16,46.5h1M19,46.5h1M23,46.5h1M17,48.5h1M0,52.5h1M17,52.5h1M2,54.5h1M1,56.5h1M1,60.5h1M5,62.5h1M7,64.5h1M0,66.5h1M24,66.5h1M1,70.5h1M6,70.5h1M8,72.5h1M16,72.5h1M3,76.5h1M7,76.5h1M12,76.5h1M3,78.5h1M21,80.5h1M23,80.5h1M1,86.5h1M15,86.5h1M11,90.5h1M14,90.5h1M0,92.5h1M2,94.5h1M0,96.5h1M12,96.5h1M1,98.5h1M3,98.5h1M9,98.5h1M24,98.5h1M2,100.5h1M22,100.5h1M8,102.5h1M13,102.5h1M0,104.5h1M12,104.5h1M22,104.5h1M1,108.5h1M14,108.5h1M24,108.5h1M0,112.5h1M5,112.5h1M6,116.5h1M1,118.5h1M14,118.5h1M21,118.5h1M0,120.5h1M3,120.5h1M6,120.5h1M2,122.5h1M16,126.5h1M22,126.5h1M24,126.5h1M6,130.5h1M15,132.5h1M18,134.5h1M4,136.5h1M8,136.5h1M15,136.5h1M18,136.5h1M22,136.5h1M17,142.5h1M22,142.5h1M5,148.5h1M8,148.5h1M13,148.5h1M18,148.5h1M9,152.5h1M8,156.5h1M5,158.5h1M20,158.5h1M4,162.5h1M8,162.5h1M11,166.5h1M0,168.5h1M11,168.5h1M17,168.5h1M3,170.5h1M6,174.5h1M13,174.5h1M11,176.5h1M1,178.5h1M20,178.5h1M3,182.5h1M12,182.5h1M16,182.5h1M22,182.5h1M24,182.5h1M1,184.5h1M3,186.5h1M21,186.5h1M1,188.5h1M6,188.5h1M14,188.5h1M16,190.5h1M23,190.5h1M8,192.5h1M18,192.5h1M5,196.5h1M16,196.5h1M12,200.5h1M0,202.5h1M7,202.5h1M5,206.5h1M17,210.5h1M22,210.5h1M1,212.5h1M12,212.5h1M24,214.5h1M2,218.5h1M21,218.5h1M24,218.5h1M14,220.5h1M11,222.5h1M4,226.5h1M14,226.5h1M1,228.5h1M6,230.5h1M18,232.5h1M11,238.5h1M15,238.5h1M0,240.5h1M2,242.5h1M12,242.5h1M8,246.5h1M5,248.5h1M10,252.5h1M18,252.5h1M1,254.5h1M11,254.5h1M9,256.5h1M5,258.5h1M2,264.5h1M3,266.5h1M11,268.5h1M10,270.5h1M15,270.5h1M22,270.5h1M2,272.5h1M14,272.5h1M13,274.5h1M18,274.5h1M1,278.5h1M8,278.5h1M7,282.5h1M15,282.5h1M17,282.5h1M23,282.5h1M15,284.5h1M1,290.5h1M12,290.5h1M7,292.5h1M16,292.5h1M15,294.5h1M24,294.5h1M5,302.5h1M19,302.5h1M13,308.5h1M23,310.5h1M1,312.5h1M16,312.5h1M4,314.5h1M17,314.5h1M10,316.5h1M10,318.5h1M13,318.5h1M22,318.5h1M4,322.5h1M9,322.5h1M15,322.5h1M17,322.5h1M8,326.5h1M10,326.5h1M18,326.5h1M0,334.5h1M0,336.5h1M8,336.5h1M10,338.5h1M10,340.5h1M5,342.5h1M14,342.5h1M0,344.5h1M4,344.5h1M13,344.5h1M19,344.5h1M6,346.5h1M8,346.5h1M5,348.5h1M0,358.5h1M7,358.5h1M10,358.5h1M8,362.5h1M13,362.5h1M5,366.5h1M14,366.5h1M23,366.5h1M0,368.5h1M16,370.5h1M7,374.5h1M3,380.5h1M6,380.5h1M24,382.5h1M2,384.5h1M1,388.5h1M4,390.5h1M10,390.5h1M21,390.5h1M13,402.5h1M16,402.5h1M5,404.5h1M11,404.5h1M8,408.5h1M1,410.5h1M6,410.5h1M13,410.5h1M8,412.5h1M0,414.5h1M4,414.5h1M7,414.5h1M16,414.5h1M15,416.5h1M5,418.5h1M14,422.5h1M20,422.5h1M6,426.5h1M0,428.5h1M10,428.5h1M16,428.5h1M2,430.5h1M9,432.5h1M11,434.5h1M3,438.5h1M5,438.5h1M5,440.5h1M11,440.5h1M1,442.5h1M12,444.5h1M6,446.5h1M10,446.5h1M16,448.5h1M4,452.5h1M14,454.5h1M3,456.5h1M4,458.5h1M18,458.5h1M10,460.5h1M17,460.5h1M1,466.5h1M9,466.5h1M11,466.5h1M9,468.5h1M7,470.5h1M18,470.5h1M0,472.5h1M0,474.5h1M6,478.5h1M17,482.5h1M17,484.5h1M22,484.5h1M5,488.5h1M10,488.5h1M2,490.5h1M8,490.5h1M0,492.5h1M8,492.5h1M1,496.5h1M0,498.5h1M24,498.5h1M4,500.5h1M8,500.5h1M0,504.5h1M20,506.5h1M23,506.5h1M20,508.5h1M24,508.5h1M1,510.5h1M0,512.5h1M5,512.5h1M12,512.5h1M13,514.5h1M1,518.5h1M4,518.5h1M11,520.5h1M3,526.5h1M5,528.5h1M1,530.5h1M20,532.5h1M13,534.5h1M1,536.5h1M24,536.5h1M13,540.5h1M23,540.5h1M5,544.5h1M2,546.5h1M0,548.5h1M3,548.5h1M7,548.5h1M10,548.5h1M19,550.5h1M24,550.5h1M1,552.5h1M7,552.5h1M2,554.5h1M4,556.5h1M8,556.5h1M11,558.5h1M17,558.5h1M7,562.5h1M13,562.5h1M3,564.5h1M5,566.5h1M7,566.5h1M16,568.5h1M11,570.5h1M13,570.5h1M6,572.5h1M12,572.5h1M13,574.5h1M1,578.5h1M3,578.5h1M9,578.5h1M19,578.5h1M22,582.5h1M1,584.5h1M5,584.5h1M14,584.5h1M22,584.5h1M23,590.5h1M1,594.5h1M19,594.5h1M8,598.5h1M6,604.5h1M10,604.5h1M4,610.5h1M13,610.5h1M8,614.5h1M4,616.5h1M5,618.5h1M4,624.5h1M1,626.5h1M4,626.5h1M13,628.5h1M17,628.5h1M21,628.5h1M24,628.5h1M8,632.5h1M4,638.5h1M12,638.5h1M12,640.5h1M8,642.5h1M13,642.5h1M0,646.5h1M16,646.5h1M8,648.5h1M18,650.5h1M24,650.5h1M5,654.5h1M18,656.5h1M3,658.5h1M10,658.5h1M17,660.5h1M1,662.5h1M10,662.5h1M12,662.5h1M0,666.5h1M0,668.5h1M3,670.5h1M23,670.5h1M0,674.5h1M5,678.5h1M3,682.5h1M14,682.5h1M19,682.5h1M4,686.5h1M3,688.5h1M9,688.5h1M0,694.5h1M5,694.5h1M15,694.5h1M24,694.5h1M18,698.5h1M1,700.5h1M7,700.5h1M13,700.5h1M8,704.5h1M11,708.5h1M20,708.5h1M22,708.5h1M1,710.5h1M13,710.5h1M11,714.5h1M1,716.5h1M5,716.5h1M10,720.5h1M14,720.5h1M3,722.5h1M13,722.5h1M20,722.5h1M7,724.5h1M11,724.5h1M5,726.5h1M5,734.5h1M18,734.5h1M1,736.5h1M12,736.5h1M8,738.5h1M17,738.5h1M5,740.5h1M2,744.5h1M3,746.5h1M13,746.5h1M0,748.5h1M21,748.5h1M0,752.5h1M6,752.5h1M12,754.5h1M4,756.5h1M6,760.5h1M1,762.5h1M12,762.5h1M11,764.5h1M2,766.5h1M5,766.5h1M13,766.5h1M7,770.5h1M10,770.5h1M17,770.5h1M17,772.5h1M24,772.5h1M11,776.5h1M2,780.5h1M19,780.5h1M8,782.5h1M0,784.5h1M10,784.5h1M5,786.5h1M10,794.5h1M19,794.5h1M21,796.5h1M7,798.5h1M13,798.5h1M15,798.5h1M20,798.5h1M24,798.5h1M2,800.5h1M8,802.5h1M3,804.5h1M15,806.5h1M2,808.5h1M12,808.5h1M20,808.5h1M0,810.5h1M4,810.5h1M7,812.5h1M0,816.5h1M11,816.5h1M1,818.5h1M3,818.5h1M12,820.5h1" stroke="#7fb2cf" stroke-width="1" fill="none"/><use href="#mb" y="1" opacity="0.4"/><use href="#mo" y="1" opacity="0.4"/><rect x="0" y="0" width="1" height="822" fill="#1f1f1f" opacity="0.45"/></svg>
</body></html>
